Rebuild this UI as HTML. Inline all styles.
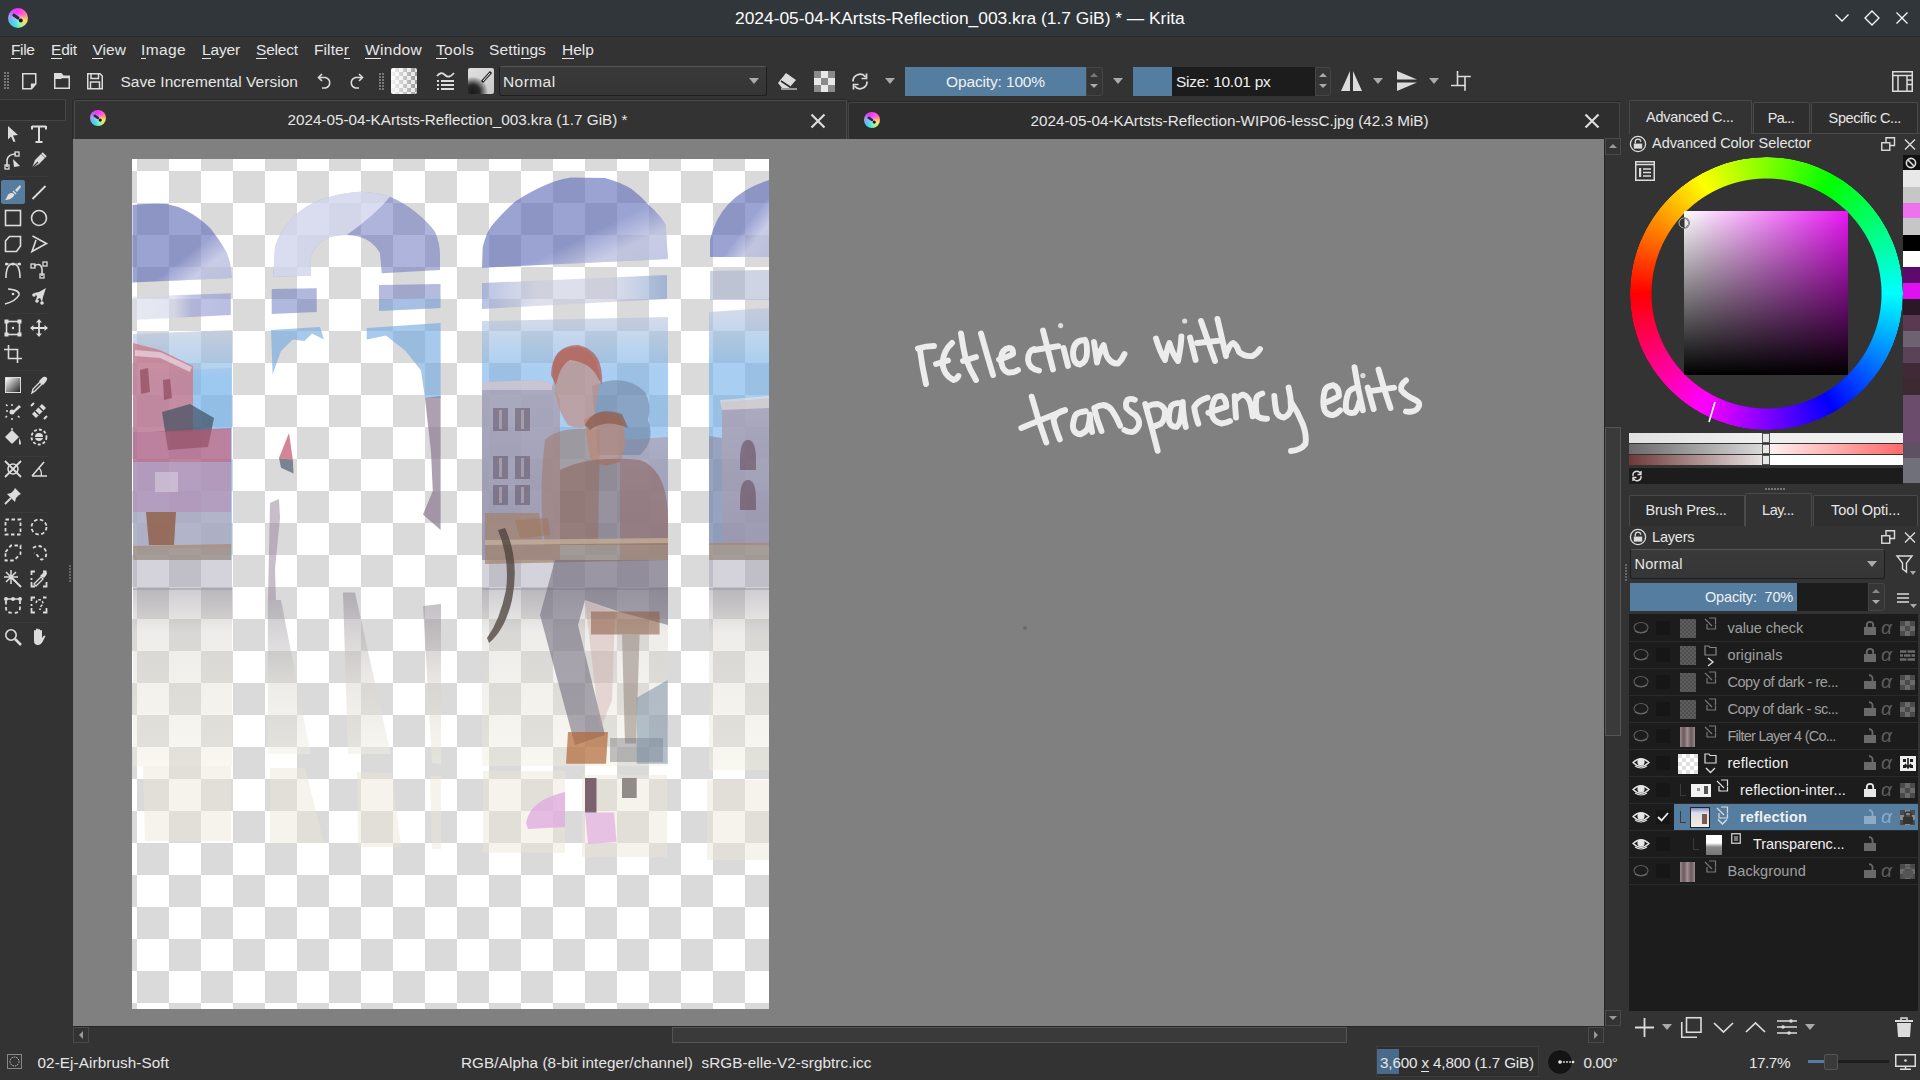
<!DOCTYPE html>
<html><head><meta charset="utf-8"><style>
*{box-sizing:border-box;margin:0;padding:0}
html,body{width:1920px;height:1080px;overflow:hidden;background:#2b2b2b;font-family:"Liberation Sans",sans-serif;color:#e6e6e6}
.a{position:absolute}
.t{position:absolute;white-space:pre;line-height:1}
svg.a{overflow:visible}
</style></head><body>
<div class="a" style="left:0px;top:0px;width:1920px;height:36px;background:#31363b;"></div>
<div class="a" style="left:7.75px;top:7.5px;width:20px;height:20px;border-radius:50%;background:radial-gradient(circle at 50% 55%,rgba(200,230,255,0.55) 0,rgba(200,230,255,0) 45%),conic-gradient(from 0deg,#ff30ff 0deg,#ff70b0 60deg,#ffe060 110deg,#a0f0a0 160deg,#30e8e0 200deg,#60c0f0 240deg,#a0a0f0 280deg,#d050f0 320deg,#ff30ff 360deg)"></div><svg class="a" style="left:7.75px;top:7.5px;" width="20" height="20" viewBox="0 0 20 20"><path d="M6.0 7.199999999999999 L10.0 10.0" stroke="#2a2838" stroke-width="3.2" stroke-linecap="round"/><circle cx="12.8" cy="12.6" r="2.0" fill="#1a1a1a"/></svg>
<div class="t" style="left:735.00px;top:10.27px;font-size:17.4px;color:#fcfcfc;letter-spacing:-0.012px;">2024-05-04-KArtsts-Reflection_003.kra (1.7 GiB) * — Krita</div>
<svg class="a" style="left:1834px;top:12px;" width="16" height="12" viewBox="0 0 16 12"><path d="M1.5 2.5 L8 9 L14.5 2.5" fill="none" stroke="#fcfcfc" stroke-width="1.3"/></svg>
<svg class="a" style="left:1864px;top:10px;" width="16" height="16" viewBox="0 0 16 16"><path d="M8 1 L15 8 L8 15 L1 8 Z" fill="none" stroke="#fcfcfc" stroke-width="1.3"/></svg>
<svg class="a" style="left:1895px;top:11px;" width="14" height="14" viewBox="0 0 14 14"><path d="M1.5 1.5 L12.5 12.5 M12.5 1.5 L1.5 12.5" fill="none" stroke="#fcfcfc" stroke-width="1.3"/></svg>
<div class="a" style="left:0px;top:36px;width:1920px;height:64px;background:#333333;"></div>
<div class="a" style="left:0px;top:36px;width:1920px;height:1px;background:#2a2a2a;"></div>
<div class="t" style="left:11.00px;top:42.38px;font-size:15.5px;color:#e6e6e6;letter-spacing:-0.369px;">File</div>
<div class="a" style="left:11px;top:57.5px;width:10px;height:1px;background:#e6e6e6;"></div>
<div class="t" style="left:51.00px;top:42.38px;font-size:15.5px;color:#e6e6e6;letter-spacing:-0.177px;">Edit</div>
<div class="a" style="left:51px;top:57.5px;width:11px;height:1px;background:#e6e6e6;"></div>
<div class="t" style="left:92.50px;top:42.38px;font-size:15.5px;color:#e6e6e6;letter-spacing:0.046px;">View</div>
<div class="a" style="left:92px;top:57.5px;width:11px;height:1px;background:#e6e6e6;"></div>
<div class="t" style="left:141.00px;top:42.38px;font-size:15.5px;color:#e6e6e6;letter-spacing:0.384px;">Image</div>
<div class="a" style="left:141px;top:57.5px;width:5px;height:1px;background:#e6e6e6;"></div>
<div class="t" style="left:202.00px;top:42.38px;font-size:15.5px;color:#e6e6e6;letter-spacing:-0.155px;">Layer</div>
<div class="a" style="left:202px;top:57.5px;width:9px;height:1px;background:#e6e6e6;"></div>
<div class="t" style="left:256.00px;top:42.38px;font-size:15.5px;color:#e6e6e6;letter-spacing:-0.180px;">Select</div>
<div class="a" style="left:256px;top:57.5px;width:11px;height:1px;background:#e6e6e6;"></div>
<div class="t" style="left:314.00px;top:42.38px;font-size:15.5px;color:#e6e6e6;letter-spacing:0.092px;">Filter</div>
<div class="a" style="left:344px;top:57.5px;width:6px;height:1px;background:#e6e6e6;"></div>
<div class="t" style="left:365.00px;top:42.38px;font-size:15.5px;color:#e6e6e6;letter-spacing:0.312px;">Window</div>
<div class="a" style="left:365px;top:57.5px;width:16px;height:1px;background:#e6e6e6;"></div>
<div class="t" style="left:436.00px;top:42.38px;font-size:15.5px;color:#e6e6e6;letter-spacing:0.363px;">Tools</div>
<div class="a" style="left:436px;top:57.5px;width:11px;height:1px;background:#e6e6e6;"></div>
<div class="t" style="left:489.00px;top:42.38px;font-size:15.5px;color:#e6e6e6;letter-spacing:0.124px;">Settings</div>
<div class="a" style="left:521px;top:57.5px;width:10px;height:1px;background:#e6e6e6;"></div>
<div class="t" style="left:562.00px;top:42.38px;font-size:15.5px;color:#e6e6e6;letter-spacing:0.030px;">Help</div>
<div class="a" style="left:562px;top:57.5px;width:12px;height:1px;background:#e6e6e6;"></div>
<div class="a" style="left:4px;top:72px;width:2px;height:2px;background:#777;"></div>
<div class="a" style="left:7px;top:72px;width:2px;height:2px;background:#777;"></div>
<div class="a" style="left:4px;top:75px;width:2px;height:2px;background:#777;"></div>
<div class="a" style="left:7px;top:75px;width:2px;height:2px;background:#777;"></div>
<div class="a" style="left:4px;top:78px;width:2px;height:2px;background:#777;"></div>
<div class="a" style="left:7px;top:78px;width:2px;height:2px;background:#777;"></div>
<div class="a" style="left:4px;top:81px;width:2px;height:2px;background:#777;"></div>
<div class="a" style="left:7px;top:81px;width:2px;height:2px;background:#777;"></div>
<div class="a" style="left:4px;top:84px;width:2px;height:2px;background:#777;"></div>
<div class="a" style="left:7px;top:84px;width:2px;height:2px;background:#777;"></div>
<div class="a" style="left:4px;top:87px;width:2px;height:2px;background:#777;"></div>
<div class="a" style="left:7px;top:87px;width:2px;height:2px;background:#777;"></div>
<svg class="a" style="left:22px;top:73px;" width="15" height="17" viewBox="0 0 15 17"><path d="M0.75 0.75 H13.75 V11 L9.5 15.75 H0.75 Z" fill="none" stroke="#dcdcdc" stroke-width="1.5"/><path d="M13.75 11 H9.5 V15.75" fill="#dcdcdc" stroke="#dcdcdc" stroke-width="1.2"/></svg>
<svg class="a" style="left:54px;top:73px;" width="17" height="17" viewBox="0 0 17 17"><path d="M0.75 4.5 H15.25 V15.25 H0.75 Z" fill="none" stroke="#dcdcdc" stroke-width="1.5"/><path d="M0 0 H7.5 L9.5 2.5 H16 V4 H9 L7 6 H0Z" fill="#dcdcdc"/></svg>
<svg class="a" style="left:87px;top:73px;" width="16" height="17" viewBox="0 0 16 17"><path d="M0.75 0.75 H13 L15.25 3 V15.75 H0.75 Z" fill="none" stroke="#dcdcdc" stroke-width="1.5"/><path d="M4 1 V5.5 H11.5 V1" fill="none" stroke="#dcdcdc" stroke-width="1.5"/><path d="M3.5 15.5 V9 H12.5 V15.5" fill="none" stroke="#dcdcdc" stroke-width="1.5"/></svg>
<div class="t" style="left:120.50px;top:74.38px;font-size:15.5px;color:#e6e6e6;letter-spacing:0.036px;">Save Incremental Version</div>
<svg class="a" style="left:317px;top:72px;" width="16" height="17" viewBox="0 0 16 17"><path d="M5 2 L1.5 5.5 L5 9" fill="none" stroke="#dcdcdc" stroke-width="1.6"/><path d="M2 5.5 H8.5 A6 5.5 0 0 1 8.5 16 H5" fill="none" stroke="#dcdcdc" stroke-width="1.6"/></svg>
<svg class="a" style="left:348px;top:72px;" width="16" height="17" viewBox="0 0 16 17"><path d="M11 2 L14.5 5.5 L11 9" fill="none" stroke="#dcdcdc" stroke-width="1.6"/><path d="M14 5.5 H7.5 A6 5.5 0 0 0 7.5 16 H11" fill="none" stroke="#dcdcdc" stroke-width="1.6"/></svg>
<div class="a" style="left:379px;top:73px;width:2px;height:2px;background:#777;"></div>
<div class="a" style="left:382px;top:73px;width:2px;height:2px;background:#777;"></div>
<div class="a" style="left:379px;top:76px;width:2px;height:2px;background:#777;"></div>
<div class="a" style="left:382px;top:76px;width:2px;height:2px;background:#777;"></div>
<div class="a" style="left:379px;top:79px;width:2px;height:2px;background:#777;"></div>
<div class="a" style="left:382px;top:79px;width:2px;height:2px;background:#777;"></div>
<div class="a" style="left:379px;top:82px;width:2px;height:2px;background:#777;"></div>
<div class="a" style="left:382px;top:82px;width:2px;height:2px;background:#777;"></div>
<div class="a" style="left:379px;top:85px;width:2px;height:2px;background:#777;"></div>
<div class="a" style="left:382px;top:85px;width:2px;height:2px;background:#777;"></div>
<div class="a" style="left:379px;top:88px;width:2px;height:2px;background:#777;"></div>
<div class="a" style="left:382px;top:88px;width:2px;height:2px;background:#777;"></div>
<div class="a" style="left:391px;top:68px;width:26px;height:26px;border-radius:2px;background:linear-gradient(90deg,rgba(255,255,255,0.9),rgba(255,255,255,0)),repeating-conic-gradient(#9a9a9a 0 25%,#e8e8e8 0 50%) 0 0/8px 8px"></div>
<svg class="a" style="left:436px;top:71px;" width="20" height="20" viewBox="0 0 20 20"><path d="M1 5 Q5 0 9 4 T18 2" fill="none" stroke="#dcdcdc" stroke-width="1.8"/><path d="M1 9h2v2h-2zM1 13h2v2h-2zM1 17h2v2h-2z" fill="#dcdcdc"/><path d="M5 10h13M5 14h13M5 18h13" stroke="#dcdcdc" stroke-width="1.8"/></svg>
<div class="a" style="left:468px;top:68px;width:26px;height:26px;border-radius:2px;background:radial-gradient(circle at 18% 92%,#1a1a1a 0,#2a2a2a 22%,rgba(200,200,200,0) 48%),linear-gradient(135deg,#e0e0e0,#c8c8c8)"></div>
<svg class="a" style="left:468px;top:68px;" width="26" height="26" viewBox="0 0 26 26"><path d="M14 14 L23 4" stroke="#222" stroke-width="3"/><path d="M15 13 L22 5" stroke="#fff" stroke-width="1"/></svg>
<div class="a" style="left:499px;top:66px;width:268px;height:30px;background:linear-gradient(#3a3a3a,#353535);border:1px solid #1e1e1e;border-top-color:#565656;border-radius:3px"></div>
<div class="t" style="left:503.00px;top:73.88px;font-size:15.5px;color:#e6e6e6;letter-spacing:0.424px;">Normal</div>
<svg class="a" style="left:749px;top:78px;" width="10" height="6" viewBox="0 0 10 6"><path d="M0 0 H10 L5 6Z" fill="#aaa"/></svg>
<svg class="a" style="left:777px;top:72px;" width="21" height="18" viewBox="0 0 21 18"><path d="M9 1 L19 8 L12 16 H5 L1 11 Z" fill="#dcdcdc"/><path d="M4 9 L13 15" stroke="#2b2b2b" stroke-width="1.6"/><path d="M4 17 H20" stroke="#dcdcdc" stroke-width="1.2"/></svg>
<div class="a" style="left:814px;top:71px;width:21px;height:21px;background:repeating-conic-gradient(#e8e8e8 0 25%,#8a8a8a 0 50%) 0 0/14px 14px"></div>
<svg class="a" style="left:850px;top:72px;" width="20" height="19" viewBox="0 0 20 19"><path d="M3 9.5 A7 7 0 0 1 15.5 5" fill="none" stroke="#dcdcdc" stroke-width="1.7"/><path d="M16.5 1.5 V6.5 H11.5" fill="none" stroke="#dcdcdc" stroke-width="1.7"/><path d="M17 9.5 A7 7 0 0 1 4.5 14" fill="none" stroke="#dcdcdc" stroke-width="1.7"/><path d="M3.5 17.5 V12.5 H8.5" fill="none" stroke="#dcdcdc" stroke-width="1.7"/></svg>
<svg class="a" style="left:885px;top:78px;" width="10" height="6" viewBox="0 0 10 6"><path d="M0 0 H10 L5 6Z" fill="#aaa"/></svg>
<div class="a" style="left:905px;top:67px;width:181px;height:29px;background:#557da0;"></div>
<div class="t" style="left:946.00px;top:74.18px;font-size:15.5px;color:#f0f0f0;letter-spacing:-0.139px;">Opacity: 100%</div>
<div class="a" style="left:1086px;top:67px;width:17px;height:29px;background:#353535;border:1px solid #454545;border-radius:0 3px 3px 0"></div>
<svg class="a" style="left:1089px;top:72px;" width="10" height="18" viewBox="0 0 10 18"><path d="M1 5 L5 1 L9 5Z" fill="#777"/><path d="M1 12 L5 16 L9 12Z" fill="#aaa"/></svg>
<svg class="a" style="left:1113px;top:78px;" width="10" height="6" viewBox="0 0 10 6"><path d="M0 0 H10 L5 6Z" fill="#aaa"/></svg>
<div class="a" style="left:1133px;top:67px;width:39px;height:29px;background:#557da0;"></div>
<div class="a" style="left:1172px;top:67px;width:143px;height:29px;background:#1c1c1c;"></div>
<div class="t" style="left:1176.00px;top:73.88px;font-size:15.5px;color:#f0f0f0;letter-spacing:-0.267px;">Size: 10.01 px</div>
<div class="a" style="left:1315px;top:67px;width:16px;height:29px;background:#353535;border:1px solid #454545;border-radius:0 3px 3px 0"></div>
<svg class="a" style="left:1318px;top:72px;" width="10" height="18" viewBox="0 0 10 18"><path d="M1 5 L5 1 L9 5Z" fill="#aaa"/><path d="M1 12 L5 16 L9 12Z" fill="#aaa"/></svg>
<svg class="a" style="left:1341px;top:71px;" width="21" height="20" viewBox="0 0 21 20"><path d="M9 0 L9 20 L0 20Z" fill="#dcdcdc"/><path d="M12 0 L12 20 L21 20Z" fill="#dcdcdc"/></svg>
<svg class="a" style="left:1373px;top:78px;" width="10" height="6" viewBox="0 0 10 6"><path d="M0 0 H10 L5 6Z" fill="#aaa"/></svg>
<svg class="a" style="left:1397px;top:71px;" width="20" height="20" viewBox="0 0 20 20"><path d="M0 0 L20 8.5 L0 8.5Z" fill="#dcdcdc"/><path d="M0 11.5 L20 11.5 L0 20Z" fill="#dcdcdc"/></svg>
<svg class="a" style="left:1429px;top:78px;" width="10" height="6" viewBox="0 0 10 6"><path d="M0 0 H10 L5 6Z" fill="#aaa"/></svg>
<svg class="a" style="left:1451px;top:71px;" width="21" height="20" viewBox="0 0 21 20"><path d="M6.5 0 V14.5 M6.5 5.5 H19.8 M0 14.5 H15 M14 5.5 V19.8" fill="none" stroke="#dcdcdc" stroke-width="1.6"/></svg>
<svg class="a" style="left:1892px;top:71px;" width="21" height="21" viewBox="0 0 21 21"><path d="M0.75 0.75 H20.25 V20.25 H0.75Z M0.75 4.5 H20.25 M6 4.5 V20.25 M15 4.5 V20.25 M15 9 H20.25 M15 13.5 H20.25" fill="none" stroke="#dcdcdc" stroke-width="1.5"/></svg>
<div class="a" style="left:0px;top:100px;width:73px;height:945px;background:#333333;"></div>
<div class="a" style="left:0px;top:99px;width:66px;height:22px;background:#2e2e2e;border:1px solid #454545;border-left:none"></div>
<svg class="a" style="left:4.0px;top:125.0px;" width="18" height="18" viewBox="0 0 18 18"><path d="M4 1 L14 10 L9 10.5 L11.5 16.5 L9.5 17 L7 11.5 L4 14.5Z" fill="#dcdcdc"/></svg>
<svg class="a" style="left:30.0px;top:125.0px;" width="18" height="18" viewBox="0 0 18 18"><path d="M2 1.5 H16 M2 1 V4.5 M16 1 V4.5 M9 1.5 V17 M5.5 17 H12.5" fill="none" stroke="#dcdcdc" stroke-width="2"/></svg>
<svg class="a" style="left:4.0px;top:151.0px;" width="18" height="18" viewBox="0 0 18 18"><path d="M3 16 V9 Q4 3 12 3" fill="none" stroke="#dcdcdc" stroke-width="1.6"/><rect x="1" y="14" width="4" height="4" fill="none" stroke="#dcdcdc" stroke-width="1.3"/><rect x="11" y="1" width="4" height="4" fill="none" stroke="#dcdcdc" stroke-width="1.3"/><path d="M9 8 L16 15 L10 16Z" fill="#dcdcdc"/></svg>
<svg class="a" style="left:30.0px;top:151.0px;" width="18" height="18" viewBox="0 0 18 18"><path d="M2 17 L5 9 L11 3 L15 7 L9 13 Z" fill="#dcdcdc"/><path d="M12 2 L16 6" stroke="#dcdcdc" stroke-width="2"/><path d="M2 17 L8 11" stroke="#333333" stroke-width="1.2"/></svg>
<div class="a" style="left:7px;top:176px;width:41px;height:1px;background:#3a3a3a;"></div>
<div class="a" style="left:1px;top:180px;width:24px;height:24px;background:#557da0;border-radius:2px;"></div>
<svg class="a" style="left:4.0px;top:183.0px;" width="18" height="18" viewBox="0 0 18 18"><path d="M16 2 L11 7 L13 9 L17 4Z" fill="#dcdcdc"/><path d="M9 8 L12 11" stroke="#dcdcdc" stroke-width="1.5"/><path d="M8 10 Q4 10 3 14 Q2 16 1 17 Q6 17 9 14 Q11 12 10 11Z" fill="#e8e0d8"/></svg>
<svg class="a" style="left:30.0px;top:183.0px;" width="18" height="18" viewBox="0 0 18 18"><path d="M2.5 16 L15.5 3" stroke="#dcdcdc" stroke-width="1.8"/></svg>
<svg class="a" style="left:4.0px;top:209.0px;" width="18" height="18" viewBox="0 0 18 18"><rect x="1.5" y="1.5" width="15" height="15" fill="none" stroke="#dcdcdc" stroke-width="1.6"/></svg>
<svg class="a" style="left:30.0px;top:209.0px;" width="18" height="18" viewBox="0 0 18 18"><circle cx="9" cy="9" r="7.5" fill="none" stroke="#dcdcdc" stroke-width="1.6"/></svg>
<svg class="a" style="left:4.0px;top:235.0px;" width="18" height="18" viewBox="0 0 18 18"><path d="M1.5 6 L5.5 1.5 H16.5 V11 L12.5 16.5 H1.5Z" fill="none" stroke="#dcdcdc" stroke-width="1.6"/></svg>
<svg class="a" style="left:30.0px;top:235.0px;" width="18" height="18" viewBox="0 0 18 18"><path d="M2.5 1 L16.5 8.5 L2 16.5 L6 5" fill="none" stroke="#dcdcdc" stroke-width="1.6"/></svg>
<svg class="a" style="left:4.0px;top:261.0px;" width="18" height="18" viewBox="0 0 18 18"><path d="M2 17 Q2 3 9 3 Q16 3 16 17" fill="none" stroke="#dcdcdc" stroke-width="1.6"/><circle cx="2.5" cy="3" r="1.6" fill="#dcdcdc"/><circle cx="9" cy="3" r="1.6" fill="#dcdcdc"/><circle cx="15.5" cy="3" r="1.6" fill="#dcdcdc"/><path d="M2.5 3H15.5" stroke="#dcdcdc" stroke-width="1"/></svg>
<svg class="a" style="left:30.0px;top:261.0px;" width="18" height="18" viewBox="0 0 18 18"><path d="M4 5 Q11 1 12 8 V15" fill="none" stroke="#dcdcdc" stroke-width="1.6"/><rect x="1" y="3" width="4" height="4" fill="none" stroke="#dcdcdc" stroke-width="1.3"/><rect x="13" y="1" width="4" height="4" fill="none" stroke="#dcdcdc" stroke-width="1.3"/><rect x="10" y="13" width="4" height="4" fill="none" stroke="#dcdcdc" stroke-width="1.3"/></svg>
<svg class="a" style="left:4.0px;top:287.0px;" width="18" height="18" viewBox="0 0 18 18"><path d="M4 2 Q16 3 15 8 Q12 14 1 17" fill="none" stroke="#dcdcdc" stroke-width="1.6"/><circle cx="9" cy="7" r="1.3" fill="#dcdcdc"/></svg>
<svg class="a" style="left:30.0px;top:287.0px;" width="18" height="18" viewBox="0 0 18 18"><path d="M16 1 L9 5 L4 6 L7 9 L6 13 L10 11 L12 15 L13 10 Z" fill="#dcdcdc"/><circle cx="4" cy="8" r="1.8" fill="#dcdcdc"/><circle cx="7" cy="14" r="1.8" fill="#dcdcdc"/><circle cx="12" cy="16" r="1.8" fill="#dcdcdc"/></svg>
<div class="a" style="left:7px;top:313px;width:41px;height:1px;background:#3a3a3a;"></div>
<svg class="a" style="left:4.0px;top:319.0px;" width="18" height="18" viewBox="0 0 18 18"><rect x="2.5" y="2.5" width="13" height="13" fill="none" stroke="#dcdcdc" stroke-width="1.6"/><rect x="0.5" y="0.5" width="4" height="4" fill="#dcdcdc"/><rect x="13.5" y="0.5" width="4" height="4" fill="#dcdcdc"/><rect x="0.5" y="13.5" width="4" height="4" fill="#dcdcdc"/><rect x="13.5" y="13.5" width="4" height="4" fill="#dcdcdc"/><circle cx="9" cy="9" r="1.2" fill="#dcdcdc"/></svg>
<svg class="a" style="left:30.0px;top:319.0px;" width="18" height="18" viewBox="0 0 18 18"><path d="M9 1 V17 M1 9 H17" stroke="#dcdcdc" stroke-width="1.8"/><path d="M9 0 L12 3.5 H6Z M9 18 L12 14.5 H6Z M0 9 L3.5 6 V12Z M18 9 L14.5 6 V12Z" fill="#dcdcdc"/></svg>
<svg class="a" style="left:4.0px;top:345.0px;" width="18" height="18" viewBox="0 0 18 18"><path d="M4.5 0 V13.5 H18 M0 4.5 H13.5 V18" fill="none" stroke="#dcdcdc" stroke-width="1.6" stroke-width="2"/></svg>
<div class="a" style="left:7px;top:370px;width:41px;height:1px;background:#3a3a3a;"></div>
<div class="a" style="left:5px;top:377px;width:16px;height:16px;border:1.5px solid #dcdcdc;background:linear-gradient(135deg,#fff,#222)"></div>
<svg class="a" style="left:30.0px;top:376.0px;" width="18" height="18" viewBox="0 0 18 18"><path d="M2 17 L3 13 L10 6 L12 8 L5 15Z" fill="none" stroke="#dcdcdc" stroke-width="1.4"/><path d="M9 5 L13 1 Q16 0 17 2 Q18 4 13 9Z" fill="#dcdcdc"/></svg>
<svg class="a" style="left:4.0px;top:402.0px;" width="18" height="18" viewBox="0 0 18 18"><path d="M15 3 L9 9 L10 11 L17 5Z" fill="#dcdcdc"/><circle cx="8" cy="10" r="2.5" fill="#dcdcdc"/><path d="M2 9h2M14 14l1.5 1.5M8 16v2M3 14l-1.5 1.5M3.5 4L2 2.5M8 2v2" stroke="#dcdcdc" stroke-width="1.5"/></svg>
<svg class="a" style="left:30.0px;top:402.0px;" width="18" height="18" viewBox="0 0 18 18"><path d="M2 12 L12 2 L16 6 L6 16Z" fill="#dcdcdc"/><path d="M5 9 L9 13 M9 5 L13 9" stroke="#333333" stroke-width="1.5"/><path d="M1 4 L4 1 M14 17 L17 14" stroke="#dcdcdc" stroke-width="2"/></svg>
<svg class="a" style="left:4.0px;top:428.0px;" width="18" height="18" viewBox="0 0 18 18"><path d="M1 9 L8 2 L15 9 L9 15 Q8 16 7 15Z" fill="#dcdcdc"/><path d="M1 9 H15" stroke="#333333" stroke-width="0"/><path d="M15 10 Q17 13 17 16 Q16 17 15 16 Q15 13 15 10Z" fill="#dcdcdc"/><path d="M8 2 V0" stroke="#dcdcdc" stroke-width="1.5"/></svg>
<svg class="a" style="left:30.0px;top:428.0px;" width="18" height="18" viewBox="0 0 18 18"><circle cx="9" cy="9" r="7.5" fill="none" stroke="#dcdcdc" stroke-width="1.8" stroke-dasharray="3 2"/><path d="M5 9 A4 4 0 0 1 13 9Z" fill="#dcdcdc"/><path d="M5 10 H13 Q12 13 9 13 Q6 13 5 10Z" fill="#dcdcdc"/></svg>
<div class="a" style="left:7px;top:456px;width:41px;height:1px;background:#3a3a3a;"></div>
<svg class="a" style="left:4.0px;top:460.0px;" width="18" height="18" viewBox="0 0 18 18"><circle cx="9" cy="9" r="5" fill="none" stroke="#dcdcdc" stroke-width="1.6"/><path d="M1 1 L17 17 M17 1 L1 17" stroke="#dcdcdc" stroke-width="1.8"/></svg>
<svg class="a" style="left:30.0px;top:460.0px;" width="18" height="18" viewBox="0 0 18 18"><path d="M2 16 L14 2 M2 16 H17" fill="none" stroke="#dcdcdc" stroke-width="1.6"/><path d="M9 8 A8 8 0 0 1 11 16" fill="none" stroke="#dcdcdc" stroke-width="1.3"/></svg>
<svg class="a" style="left:4.0px;top:487.0px;" width="18" height="18" viewBox="0 0 18 18"><path d="M11 1 L17 7 L15 8 L12 11 L11 15 L3 7 L7 6 L10 3Z" fill="#dcdcdc"/><path d="M7 11 L1 17" stroke="#dcdcdc" stroke-width="1.8"/></svg>
<div class="a" style="left:7px;top:512px;width:41px;height:1px;background:#3a3a3a;"></div>
<svg class="a" style="left:4.0px;top:518.0px;" width="18" height="18" viewBox="0 0 18 18"><rect x="1.5" y="1.5" width="15" height="15" fill="none" stroke="#dcdcdc" stroke-width="1.8" stroke-dasharray="3.5 2.5"/></svg>
<svg class="a" style="left:30.0px;top:518.0px;" width="18" height="18" viewBox="0 0 18 18"><circle cx="9" cy="9" r="7.5" fill="none" stroke="#dcdcdc" stroke-width="1.8" stroke-dasharray="3.5 2.5"/></svg>
<svg class="a" style="left:4.0px;top:544.0px;" width="18" height="18" viewBox="0 0 18 18"><path d="M1.5 8 L7 1.5 H16.5 V10 L10 16.5 H1.5Z" fill="none" stroke="#dcdcdc" stroke-width="1.8" stroke-dasharray="3.5 2.5"/></svg>
<svg class="a" style="left:30.0px;top:544.0px;" width="18" height="18" viewBox="0 0 18 18"><path d="M3 4 Q8 0 14 4 Q18 9 15 14 Q11 17 9 14 Q7 10 4 9" fill="none" stroke="#dcdcdc" stroke-width="1.8" stroke-dasharray="3.5 2.5"/></svg>
<svg class="a" style="left:4.0px;top:570.0px;" width="18" height="18" viewBox="0 0 18 18"><path d="M7 7 L17 17" stroke="#dcdcdc" stroke-width="2"/><path d="M7 0V14M0 7H14M2 2L12 12M12 2L2 12" stroke="#dcdcdc" stroke-width="1.5"/></svg>
<svg class="a" style="left:30.0px;top:570.0px;" width="18" height="18" viewBox="0 0 18 18"><path d="M1.5 5 V1.5 H5 M13 1.5 H16.5 M16.5 12 V16.5 H13 M5 16.5 H1.5 V12 M1.5 8V10" fill="none" stroke="#dcdcdc" stroke-width="1.8"/><path d="M4 14 L11 7 L13 9 L6 16Z" fill="none" stroke="#dcdcdc" stroke-width="1.3"/><path d="M10 6 L14 2 Q16 1 17 3 Q17 5 14 8Z" fill="#dcdcdc"/></svg>
<svg class="a" style="left:4.0px;top:596.0px;" width="18" height="18" viewBox="0 0 18 18"><path d="M2 5 V12 Q2 17 9 17 Q16 17 16 12 V5" fill="none" stroke="#dcdcdc" stroke-width="1.8" stroke-dasharray="3.5 2.5"/><path d="M2 3H16" stroke="#dcdcdc" stroke-width="1.5"/><circle cx="2" cy="3" r="2" fill="#dcdcdc"/><circle cx="9" cy="3" r="2" fill="#dcdcdc"/><circle cx="16" cy="3" r="2" fill="#dcdcdc"/></svg>
<svg class="a" style="left:30.0px;top:596.0px;" width="18" height="18" viewBox="0 0 18 18"><path d="M1.5 5 V1.5 H5 M13 1.5 H16.5 M16.5 12 V16.5 H13 M5 16.5 H1.5 V12 M1.5 8V10" fill="none" stroke="#dcdcdc" stroke-width="1.8"/><path d="M6 7 Q7 3 11 4 Q14 6 12 9 Q10 11 10 14" fill="none" stroke="#dcdcdc" stroke-width="1.6" stroke-dasharray="2.5 1.5"/></svg>
<div class="a" style="left:7px;top:622px;width:41px;height:1px;background:#3a3a3a;"></div>
<svg class="a" style="left:4.0px;top:628.0px;" width="18" height="18" viewBox="0 0 18 18"><circle cx="7" cy="7" r="5.2" fill="none" stroke="#dcdcdc" stroke-width="1.6" stroke-width="2"/><path d="M11 11 L17 17" stroke="#dcdcdc" stroke-width="2.5"/></svg>
<svg class="a" style="left:30.0px;top:628.0px;" width="18" height="18" viewBox="0 0 18 18"><path d="M4 8 V3 Q4 2 5 2 Q6 2 6 3 V8 V1.5 Q6 0.5 7 0.5 Q8 0.5 8 1.5 V8 V2 Q8 1 9 1 Q10 1 10 2 V8 V3 Q10 2 11 2 Q12 2 12 3 V10 L13.5 8 Q14.5 7 15.5 8 L13 13 Q11 17 8 17 Q4 17 4 13Z" fill="#dcdcdc"/></svg>
<div class="a" style="left:69px;top:565px;width:2px;height:1.5px;background:#666;"></div>
<div class="a" style="left:69px;top:568px;width:2px;height:1.5px;background:#666;"></div>
<div class="a" style="left:69px;top:571px;width:2px;height:1.5px;background:#666;"></div>
<div class="a" style="left:69px;top:574px;width:2px;height:1.5px;background:#666;"></div>
<div class="a" style="left:69px;top:577px;width:2px;height:1.5px;background:#666;"></div>
<div class="a" style="left:69px;top:580px;width:2px;height:1.5px;background:#666;"></div>
<div class="a" style="left:66px;top:96px;width:1562px;height:43px;background:#333333;"></div>
<div class="a" style="left:74px;top:99px;width:773px;height:1px;background:#262626;"></div>
<div class="a" style="left:848px;top:101px;width:772px;height:1px;background:#262626;"></div>
<div class="a" style="left:72px;top:100px;width:1px;height:39px;background:#2a2a2a;"></div>
<div class="a" style="left:74px;top:100px;width:773px;height:39px;background:#333;border:1px solid #4a4a4a;border-bottom:none;border-radius:2px 2px 0 0"></div>
<div class="a" style="left:90.0px;top:110.0px;width:16px;height:16px;border-radius:50%;background:radial-gradient(circle at 50% 55%,rgba(200,230,255,0.55) 0,rgba(200,230,255,0) 45%),conic-gradient(from 0deg,#ff30ff 0deg,#ff70b0 60deg,#ffe060 110deg,#a0f0a0 160deg,#30e8e0 200deg,#60c0f0 240deg,#a0a0f0 280deg,#d050f0 320deg,#ff30ff 360deg)"></div><svg class="a" style="left:90.0px;top:110.0px;" width="16" height="16" viewBox="0 0 16 16"><path d="M4.8 5.76 L8.0 8.0" stroke="#2a2838" stroke-width="2.56" stroke-linecap="round"/><circle cx="10.24" cy="10.08" r="1.6" fill="#1a1a1a"/></svg>
<div class="t" style="left:287.50px;top:112.09px;font-size:15.25px;color:#e6e6e6;letter-spacing:0.002px;">2024-05-04-KArtsts-Reflection_003.kra (1.7 GiB) *</div>
<svg class="a" style="left:810px;top:113px;" width="16" height="16" viewBox="0 0 16 16"><path d="M1.5 1.5 L14.5 14.5 M14.5 1.5 L1.5 14.5" stroke="#dcdcdc" stroke-width="2.2"/></svg>
<div class="a" style="left:848px;top:102px;width:772px;height:37px;background:#2e2e2e;border:1px solid #454545;border-bottom:none;border-radius:2px 2px 0 0"></div>
<div class="a" style="left:864.0px;top:111.5px;width:16px;height:16px;border-radius:50%;background:radial-gradient(circle at 50% 55%,rgba(200,230,255,0.55) 0,rgba(200,230,255,0) 45%),conic-gradient(from 0deg,#ff30ff 0deg,#ff70b0 60deg,#ffe060 110deg,#a0f0a0 160deg,#30e8e0 200deg,#60c0f0 240deg,#a0a0f0 280deg,#d050f0 320deg,#ff30ff 360deg)"></div><svg class="a" style="left:864.0px;top:111.5px;" width="16" height="16" viewBox="0 0 16 16"><path d="M4.8 5.76 L8.0 8.0" stroke="#2a2838" stroke-width="2.56" stroke-linecap="round"/><circle cx="10.24" cy="10.08" r="1.6" fill="#1a1a1a"/></svg>
<div class="t" style="left:1030.50px;top:113.09px;font-size:15.25px;color:#e6e6e6;letter-spacing:-0.006px;">2024-05-04-KArtsts-Reflection-WIP06-lessC.jpg (42.3 MiB)</div>
<svg class="a" style="left:1584px;top:113px;" width="16" height="16" viewBox="0 0 16 16"><path d="M1.5 1.5 L14.5 14.5 M14.5 1.5 L1.5 14.5" stroke="#dcdcdc" stroke-width="2.2"/></svg>
<div class="a" style="left:73px;top:139px;width:1531px;height:887px;background:#808080;"></div>
<div class="a" style="left:1604px;top:139px;width:17px;height:906px;background:#333;"></div>
<div class="a" style="left:1604px;top:139px;width:1px;height:887px;background:#262626;"></div>
<div class="a" style="left:1605px;top:138px;width:16px;height:17px;border:1px solid #4a4a4a;background:#333"></div>
<svg class="a" style="left:1608px;top:142px;" width="10" height="8" viewBox="0 0 10 8"><path d="M1 6 L5 2 L9 6Z" fill="#999"/></svg>
<div class="a" style="left:1605px;top:427px;width:16px;height:309px;border:1px solid #555;background:#3a3a3a"></div>
<div class="a" style="left:1605px;top:1010px;width:16px;height:16px;border:1px solid #4a4a4a;background:#333"></div>
<svg class="a" style="left:1608px;top:1014px;" width="10" height="8" viewBox="0 0 10 8"><path d="M1 2 L5 6 L9 2Z" fill="#999"/></svg>
<div class="a" style="left:73px;top:1026px;width:1531px;height:19px;background:#333;"></div>
<div class="a" style="left:73px;top:1026px;width:1531px;height:1px;background:#262626;"></div>
<div class="a" style="left:73px;top:1027px;width:16px;height:16px;border:1px solid #4a4a4a;background:#333"></div>
<svg class="a" style="left:77px;top:1030px;" width="8" height="10" viewBox="0 0 8 10"><path d="M6 1 L2 5 L6 9Z" fill="#999"/></svg>
<div class="a" style="left:672px;top:1027px;width:675px;height:16px;border:1px solid #555;background:#3a3a3a"></div>
<div class="a" style="left:1588px;top:1027px;width:16px;height:16px;border:1px solid #4a4a4a;background:#333"></div>
<svg class="a" style="left:1592px;top:1030px;" width="8" height="10" viewBox="0 0 8 10"><path d="M2 1 L6 5 L2 9Z" fill="#999"/></svg>
<div class="a" style="left:1022.5px;top:625.5px;width:4px;height:4px;background:#6c6c6c;border-radius:50%;"></div>
<svg class="a" style="left:0;top:0" width="1920" height="1080"><g fill="none" stroke="#ececec" stroke-width="5.9" stroke-linecap="round" stroke-linejoin="round"><path d="M920 350 Q922 366 926 384"/><path d="M918 348.5 Q926 346 934 346"/><path d="M952 343 Q944 350 942.5 362 Q943 375 953.7 380 Q957 379 958.4 376"/><path d="M936 364 L948 360.5"/><path d="M961 333.5 Q963 347 965.5 358 Q970 370 976 380"/><path d="M963 361 L976 357"/><path d="M981 333.5 Q987 355 993 375"/><path d="M999 359.5 Q1008 357 1013 354 Q1013.5 348 1009 348 Q1002 349 1001 358 Q1001 370 1008 372.5 Q1014 373 1018 370"/><path d="M1034 349 Q1028 351 1028 360 Q1029 369 1039 370.6"/><path d="M1043 330.5 L1053 369.5"/><path d="M1034.5 350 L1058.5 346.2"/><path d="M1063.5 348 L1068 366"/><path d="M1085 340 Q1074 340 1073 352 Q1073 364 1080 364.5 Q1087 362 1087 352 Q1087 342 1085 340"/><path d="M1094 342 Q1096 355 1097 362.5 Q1100 350 1103.7 345 Q1106 356 1108 358 Q1112 364 1118 363.6 Q1122 360 1124.5 354"/><path d="M1156 338.5 Q1160 352 1165 360 Q1167 349 1169.4 343 Q1173 355 1178 361 Q1181 347 1181.4 336.5"/><path d="M1190 337.5 L1195.6 360"/><path d="M1201 321 L1215 361"/><path d="M1197 343 L1220 340.6"/><path d="M1217.5 319 L1226 356"/><path d="M1227 352 Q1230 344 1233 343 Q1237 345 1239 352 Q1245 357 1252.5 356 Q1257 354 1260 349"/><path d="M1031.7 396.7 Q1038 420 1046.3 442.5"/><path d="M1021.3 427.9 Q1039 420.6 1065 410.2"/><path d="M1059.8 439.4 Q1055 428 1053.5 419.6 Q1056 412 1065 410.2"/><path d="M1085.8 411.3 Q1077 412 1075 416 Q1072 425 1073.3 429 Q1075 434 1080.6 434.2 Q1086 432 1087.9 427.9 Q1090 420 1090 414.4 Q1090 424 1092.1 432"/><path d="M1101.5 431 Q1097 420 1094.2 408.1 Q1099 405 1103.5 405 Q1109 406 1111.9 410.2 Q1117 418 1120.2 425.8"/><path d="M1134.8 399.8 Q1131 398 1127.5 399.8 Q1125 403 1126.5 408.1 Q1130 412 1135.8 415.4 Q1140 420 1139 424.8 Q1137 431 1131.7 432.1 Q1127 432 1124.4 430"/><path d="M1145.2 404 Q1152 428 1157.7 450.8"/><path d="M1147.3 407.1 Q1151 404 1157.7 404 Q1164 406 1165 411.3 Q1165 420 1160.8 423.75 Q1156 426 1152.5 426.9"/><path d="M1180.6 402.9 Q1174 403 1171.25 406 Q1168 414 1169.2 421.7 Q1171 427 1176.5 426.9 Q1180 424 1180.6 417.5 Q1182 408 1182.7 402 Q1183 416 1185.8 426.9"/><path d="M1198.3 423.75 Q1195 414 1194.2 407.1 Q1199 400 1207.7 397.7"/><path d="M1208.4 412.7 L1226.4 406.7 Q1226 398 1221.6 395.9 Q1216 396 1214.4 399.5 Q1211 407 1212 415.1 Q1214 422 1221.6 423.5 Q1227 423 1230 421.1"/><path d="M1234.7 396 Q1235 407 1236 417.5"/><path d="M1236 399.5 Q1240 395 1243 394.7 Q1248 396 1250.3 403.1 Q1252 410 1252.7 416.3"/><path d="M1262.3 393.5 Q1257 395 1256.3 398.3 Q1255 410 1257.5 416.3 Q1261 419 1267 418.7"/><path d="M1274.3 396 Q1275 406 1276.7 412.7 Q1279 417 1283.9 417.5 Q1290 415 1291 407.9 Q1291 397 1288.6 387.6"/><path d="M1291 401.9 Q1298 412 1303 424.7 Q1307 436 1305.4 443.9 Q1301 450 1291 451"/><path d="M1327 401.9 Q1335 399 1339 395.9 Q1339 387 1333 385.2 Q1326 386 1324.6 391.1 Q1322 402 1324.6 410.3 Q1327 415 1333 415.1 Q1337 414 1340.2 410.3"/><path d="M1358.1 387.6 Q1351 388 1348.5 392.3 Q1345 401 1346.1 410.3 Q1349 414 1354.5 412.7 Q1358 409 1359.3 401.9"/><path d="M1354.5 367.2 Q1358 390 1362.9 410.3"/><path d="M1367.7 387.6 L1373.7 409.1"/><path d="M1378.5 369.6 Q1384 390 1390.5 407.9"/><path d="M1370.1 391.1 L1394.1 387.6"/><path d="M1406 380.4 Q1400 385 1401.2 389.9 Q1405 395 1414.4 399.5 Q1420 402 1419.2 405.5 Q1417 411 1412 411.5 Q1408 412 1406 411.5"/><circle cx="1060.6" cy="325.6" r="2.6" fill="#dcdcdc" stroke="none"/><circle cx="1184.7" cy="321" r="2.6" fill="#dcdcdc" stroke="none"/><circle cx="1362.9" cy="375.6" r="2.6" fill="#dcdcdc" stroke="none"/></g></svg>
<div class="a" style="left:132px;top:159px;width:637px;height:850px;background:repeating-conic-gradient(#dadada 0 25%,#ffffff 0 50%) 37px 44px/64px 64px"></div>
<svg class="a" style="left:0;top:0" width="1920" height="1080"><defs>
<clipPath id="cv"><rect x="132" y="159" width="637" height="850"/></clipPath>
<linearGradient id="streak" gradientUnits="objectBoundingBox" x1="0" y1="0" x2="1" y2="1"><stop offset="0" stop-color="#fff" stop-opacity="0"/><stop offset="0.6" stop-color="#fff" stop-opacity="0"/><stop offset="0.78" stop-color="#fff" stop-opacity="0.45"/><stop offset="1" stop-color="#fff" stop-opacity="0.4"/></linearGradient>
<linearGradient id="band" x1="0" y1="0" x2="1" y2="0"><stop offset="0" stop-color="#8a9cd0"/><stop offset="0.3" stop-color="#c8cce0"/><stop offset="0.7" stop-color="#c4c8dc"/><stop offset="1" stop-color="#7a9ad0"/></linearGradient>
<linearGradient id="sky" x1="0" y1="0" x2="0" y2="1"><stop offset="0" stop-color="#b8c4dc"/><stop offset="0.22" stop-color="#70aee8"/><stop offset="1" stop-color="#68b0f0"/></linearGradient>
<linearGradient id="cream" x1="0" y1="0" x2="0" y2="1"><stop offset="0" stop-color="#8a8690"/><stop offset="0.25" stop-color="#d8d4cc"/><stop offset="1" stop-color="#f0ecdc"/></linearGradient>
<linearGradient id="legs" x1="0" y1="0" x2="0" y2="1"><stop offset="0" stop-color="#8a8490"/><stop offset="0.5" stop-color="#d6d2ca"/><stop offset="1" stop-color="#f0ede2"/></linearGradient>
<linearGradient id="bldg" x1="0" y1="0" x2="0" y2="1"><stop offset="0" stop-color="#aca2b4"/><stop offset="1" stop-color="#9a8ea0"/></linearGradient>
<linearGradient id="band1" x1="0" y1="0" x2="1" y2="0"><stop offset="0" stop-color="#d8dce8"/><stop offset="0.42" stop-color="#d0d4e8"/><stop offset="0.6" stop-color="#98a0d8"/><stop offset="1" stop-color="#8c96d0"/></linearGradient></defs><g clip-path="url(#cv)"><path d="M132.5 282.5 L132.5 205 Q150 203 166.7 204 Q177 206 185 210 Q199 217 210 228 Q220 240 226.7 253 Q230 261 230.8 268 L231.7 278Z" fill="#5d6ab8" fill-opacity="0.62" /><path d="M132.5 282.5 L132.5 205 Q150 203 166.7 204 Q177 206 185 210 Q199 217 210 228 Q220 240 226.7 253 Q230 261 230.8 268 L231.7 278Z" fill="url(#streak)" fill-opacity="1" /><path d="M132.5 296.7 L230.8 293.3 L230.8 315 L132.5 320Z" fill="url(#band1)" fill-opacity="0.62" /><path d="M133 334 L232 330 L232 560 L133 560Z" fill="url(#sky)" fill-opacity="0.6" /><path d="M133 560 L232 560 L232 590 L133 590Z" fill="#a09cac" fill-opacity="0.45" /><path d="M133 588 L232 588 L232 766 L133 766Z" fill="url(#cream)" fill-opacity="0.42" /><path d="M133 343 L160 350 L193 366 L193 432 L133 432Z" fill="#d07080" fill-opacity="0.7" /><path d="M193 370 L231 368 L231 430 L193 432Z" fill="#80b8f0" fill-opacity="0.3" /><path d="M135 350 L160 352 L192 367 L190 372 L160 358 L135 356Z" fill="#f0e8f0" fill-opacity="0.6" /><path d="M140 370 L148 368 L150 392 L141 394Z" fill="#7a3040" fill-opacity="0.5" /><path d="M163 380 L170 379 L172 398 L164 400Z" fill="#7a3040" fill-opacity="0.5" /><path d="M162 412 L190 404 L214 418 L208 447 L168 450Z" fill="#405060" fill-opacity="0.7" /><path d="M133 432 L150 432 L231 428 L231 462 L133 462Z" fill="#c8506a" fill-opacity="0.62" /><path d="M133 462 L231 462 L231 512 L133 512Z" fill="#b890b0" fill-opacity="0.78" /><path d="M155 472 L178 472 L178 492 L155 492Z" fill="#e0d8e8" fill-opacity="0.5" /><path d="M133 512 L231 512 L231 548 L133 548Z" fill="#b8a8b8" fill-opacity="0.7" /><path d="M146 512 L176 512 L174 545 L149 545Z" fill="#8a5030" fill-opacity="0.7" /><path d="M133 546 L231 544 L231 560 L133 560Z" fill="#a88870" fill-opacity="0.7" /><path d="M143 766 L231 766 L231 841 L145 841Z" fill="#e8e4d4" fill-opacity="0.45" /><path d="M273.3 276.7 L275 246.7 Q280 232 288 223 Q299 210 313 203 Q335 193 360 191.7 Q377 192 390 196.7 Q405 203 416.7 213 Q428 222 435 231.7 Q440 243 440 255 L440 270 L381.7 273.3 L380 253 Q376 246 370 241.7 Q360 235 346.7 235 Q336 235 326.7 238.3 Q320 242 315 248 Q311 254 310.8 260 L310.8 275.8Z" fill="#5d6ab8" fill-opacity="0.5" /><path d="M275 246.7 Q280 232 288 223 Q299 210 313 203 Q335 193 360 191.7 Q377 192 390 196.7 Q375 215 346.7 235 Q336 235 326.7 238.3 Q320 242 315 248 Q311 254 310.8 260 L310.8 275.8 L273.3 276.7Z" fill="#f6f6fb" fill-opacity="0.62" /><path d="M271.7 289 L316.7 288.3 L316.7 312 L271.7 314Z" fill="#5d6ab8" fill-opacity="0.48" /><path d="M379 285 L440.5 284 L440.5 308 L379 311Z" fill="#5d6ab8" fill-opacity="0.46" /><path d="M379 300 L440.5 297 L440.5 308 L379 311Z" fill="#90c8f0" fill-opacity="0.35" /><path d="M271 330 L320 327 L324 339.5 L312 333.6 L304.5 341 L292.8 339.5 L281 351 L272.6 374.5Z" fill="#70a8e0" fill-opacity="0.62" /><path d="M366.7 328 L440.6 323 L440.6 398 L425 398 L421 370.6 L405.6 351 L386 335.6 L366.7 339.5Z" fill="#70a8e0" fill-opacity="0.62" /><path d="M425 398 L440.6 396 L440.6 530 L423 514.5 L432.8 491 L431 452Z" fill="#8a7890" fill-opacity="0.7" /><path d="M289 433 L279 458 L292.8 460Z" fill="#c05068" fill-opacity="0.7" /><path d="M279 458 L292.8 460 L293.6 473.6 L281 467.8Z" fill="#506070" fill-opacity="0.7" /><path d="M270 503 L279 499 L280 518 L275 569 L276 600 L268 600Z" fill="#9a88a0" fill-opacity="0.55" /><path d="M267.8 600 L281 600 L310.7 754 L267.8 754Z" fill="url(#legs)" fill-opacity="0.45" /><path d="M270 768 L305 768 L324 843 L270 843Z" fill="#e8e4d4" fill-opacity="0.45" /><path d="M343 592.6 L355 592.6 L390.7 754 L348 754Z" fill="url(#legs)" fill-opacity="0.5" /><path d="M357 772 L392 773 L401 847 L358 847Z" fill="#e8e4d4" fill-opacity="0.45" /><path d="M423 606 L441 604 L441 764 L432 763Z" fill="url(#legs)" fill-opacity="0.5" /><path d="M430 776 L441 776 L441 849 L432 849Z" fill="#e8e4d4" fill-opacity="0.45" /><path d="M482 267.8 L482.7 247 Q487 230 493.8 223.3 Q505 210 516 201 Q530 192 542.7 186.3 Q555 180 570.8 177.4 L604.9 178 Q620 182 631.6 189 Q642 197 649.3 205.6 Q660 215 665.6 224.8 L667.9 258.9Z" fill="#5d6ab8" fill-opacity="0.62" /><path d="M482 267.8 L482.7 247 Q487 230 493.8 223.3 Q505 210 516 201 Q530 192 542.7 186.3 Q555 180 570.8 177.4 L604.9 178 Q620 182 631.6 189 Q642 197 649.3 205.6 Q660 215 665.6 224.8 L667.9 258.9Z" fill="url(#streak)" fill-opacity="1" /><path d="M482 283 L667 275 L667 299 L482 309Z" fill="url(#band)" fill-opacity="0.6" /><path d="M482 321 L668 317 L668 560 L482 560Z" fill="url(#sky)" fill-opacity="0.6" /><path d="M482 560 L668 560 L668 590 L482 590Z" fill="#a09cac" fill-opacity="0.45" /><path d="M482 588 L668 588 L668 766 L482 766Z" fill="url(#cream)" fill-opacity="0.42" /><path d="M482 382 L540 380 L552 384 L560 400 L560 560 L482 560Z" fill="url(#bldg)" fill-opacity="0.8" /><path d="M482 382 L540 380 L552 384 L552 390 L482 390Z" fill="#e8e0e8" fill-opacity="0.5" /><path d="M493 408 L508 408 L508 431 L493 431Z" fill="#4a3a48" fill-opacity="0.4" /><path d="M499 410 L502 410 L502 429 L499 429Z" fill="#e8e0e8" fill-opacity="0.35" /><path d="M493 456 L508 456 L508 479 L493 479Z" fill="#4a3a48" fill-opacity="0.4" /><path d="M499 458 L502 458 L502 477 L499 477Z" fill="#e8e0e8" fill-opacity="0.35" /><path d="M493 485 L508 485 L508 505 L493 505Z" fill="#4a3a48" fill-opacity="0.4" /><path d="M499 487 L502 487 L502 503 L499 503Z" fill="#e8e0e8" fill-opacity="0.35" /><path d="M515 408 L530 408 L530 431 L515 431Z" fill="#4a3a48" fill-opacity="0.4" /><path d="M521 410 L524 410 L524 429 L521 429Z" fill="#e8e0e8" fill-opacity="0.35" /><path d="M515 456 L530 456 L530 479 L515 479Z" fill="#4a3a48" fill-opacity="0.4" /><path d="M521 458 L524 458 L524 477 L521 477Z" fill="#e8e0e8" fill-opacity="0.35" /><path d="M515 485 L530 485 L530 505 L515 505Z" fill="#4a3a48" fill-opacity="0.4" /><path d="M521 487 L524 487 L524 503 L521 503Z" fill="#e8e0e8" fill-opacity="0.35" /><path d="M620 440 L668 437 L668 560 L620 560Z" fill="url(#bldg)" fill-opacity="0.75" /><path d="M592 386 Q625 372 645 392 Q652 405 648 420 Q656 440 640 455 L598 455Z" fill="#6a7a98" fill-opacity="0.5" /><path d="M553 365 Q556 347 578 347 Q598 352 600 380 L594 418 Q585 433 568 425 Q553 405 553 365Z" fill="#c09088" fill-opacity="0.72" /><path d="M551 375 Q552 345 578 345 Q604 350 602 385 L598 378 Q590 362 570 360 Q560 365 556 385Z" fill="#b05a50" fill-opacity="0.72" /><path d="M545 440 Q560 425 600 430 L598 545 L545 545 Q538 500 545 440Z" fill="#a07868" fill-opacity="0.55" /><path d="M584 420 Q600 408 620 416 Q630 440 620 462 Q602 470 590 458Z" fill="#b8887a" fill-opacity="0.75" /><path d="M585 425 Q595 405 622 414 L628 428 Q605 418 590 430Z" fill="#8a5848" fill-opacity="0.7" /><path d="M560 470 Q590 455 640 460 Q668 470 668 520 L668 545 L560 545Z" fill="#8a6058" fill-opacity="0.55" /><path d="M485 513 L539 513 L542 540 L668 538 L668 560 L485 564Z" fill="#a08068" fill-opacity="0.68" /><path d="M485 540 L668 538 L668 543 L485 545Z" fill="#d8c8b0" fill-opacity="0.5" /><path d="M515 520 L548 518 L550 535 L520 538Z" fill="#a07860" fill-opacity="0.6" /><path d="M505 528 Q520 560 512 600 Q505 630 489 643 L487 638 Q500 620 506 590 Q510 560 498 530Z" fill="#4a4038" fill-opacity="0.75" /><path d="M555 560 L668 560 L668 625 L620 612 L585 600 L578 625 L605 735 L575 745 L540 615 Z" fill="#6a6478" fill-opacity="0.55" /><path d="M585 600 L615 612 L612 700 L600 730 Z" fill="#c8a0a0" fill-opacity="0.35" /><path d="M591 611.6 L659.6 611.6 L659.6 634.6 L591 634.6Z" fill="#8a5a40" fill-opacity="0.55" /><path d="M622 634.6 L639.6 634.6 L636 743.6 L625 743.6Z" fill="#9a8e84" fill-opacity="0.6" /><path d="M568 732 L608 732 L606 763.7 L566 763.7Z" fill="#b06838" fill-opacity="0.7" /><path d="M610 738 L663 738 L663 762 L610 762Z" fill="#7a7a80" fill-opacity="0.45" /><path d="M636.7 697.7 L667.7 680 L667.7 763.7 L636.7 763.7Z" fill="#7a90a8" fill-opacity="0.55" /><path d="M483 771 L565 771 L565 852.7 L483 852.7Z" fill="#e8e4d4" fill-opacity="0.45" /><path d="M582 775 L667 775 L667 857 L582 857Z" fill="#e8e4d4" fill-opacity="0.45" /><path d="M526 823 Q530 800 565 792 L565 827 L528 829Z" fill="#e0a8e0" fill-opacity="0.75" /><path d="M585 812.5 L614 812.5 L616.6 842 L588 844Z" fill="#e0b0e0" fill-opacity="0.75" /><path d="M585 778 L596.5 778 L596.5 812.5 L585 812.5Z" fill="#5a3848" fill-opacity="0.75" /><path d="M622 778 L636.7 778 L636.7 798 L622 798Z" fill="#686060" fill-opacity="0.7" /><path d="M710 257 L710 240 Q720 195 769 180 L769 257Z" fill="#5d6ab8" fill-opacity="0.62" /><path d="M710 257 L710 240 Q720 195 769 180 L769 257Z" fill="url(#streak)" fill-opacity="1" /><path d="M710 271 L769 270 L769 300 L710 300Z" fill="#a8b0d0" fill-opacity="0.55" /><path d="M709 312 L769 308 L769 560 L709 560Z" fill="url(#sky)" fill-opacity="0.6" /><path d="M709 560 L769 560 L769 590 L709 590Z" fill="#a09cac" fill-opacity="0.45" /><path d="M709 588 L769 588 L769 770 L709 770Z" fill="url(#cream)" fill-opacity="0.42" /><path d="M722 402 L769 398 L769 545 L722 545Z" fill="url(#bldg)" fill-opacity="0.8" /><path d="M720 400 L769 396 L769 408 L722 410Z" fill="#f0e8e0" fill-opacity="0.55" /><path d="M740 460 Q740 440 748 440 Q756 440 756 460 L756 470 L740 470Z" fill="#5a3a48" fill-opacity="0.5" /><path d="M740 500 Q740 480 748 480 Q756 480 756 500 L756 510 L740 510Z" fill="#5a3a48" fill-opacity="0.5" /><path d="M709 436 L722 438 L722 545 L709 545Z" fill="#8a8096" fill-opacity="0.55" /><path d="M709 543 L769 543 L769 560 L709 560Z" fill="#a88870" fill-opacity="0.7" /><path d="M707 780 L769 780 L769 860 L707 860Z" fill="#e8e4d4" fill-opacity="0.45" /></g></svg>
<div class="a" style="left:1621px;top:96px;width:299px;height:949px;background:#333333;"></div>
<div class="a" style="left:1621px;top:133px;width:299px;height:912px;background:#333333;"></div>
<div class="a" style="left:1629px;top:100px;width:123px;height:34px;background:#333;border:1px solid #4a4a4a;border-bottom:none;border-radius:2px 2px 0 0"></div>
<div class="a" style="left:1753px;top:102px;width:57px;height:31px;background:#2e2e2e;border:1px solid #4a4a4a;border-bottom:none;border-radius:2px 2px 0 0"></div>
<div class="a" style="left:1811px;top:102px;width:107px;height:31px;background:#2e2e2e;border:1px solid #4a4a4a;border-bottom:none;border-radius:2px 2px 0 0"></div>
<div class="a" style="left:1752px;top:133px;width:168px;height:1px;background:#4a4a4a;"></div>
<div class="t" style="left:1646.00px;top:109.73px;font-size:14.5px;color:#e6e6e6;letter-spacing:-0.268px;">Advanced C...</div>
<div class="t" style="left:1767.70px;top:110.53px;font-size:14.5px;color:#e6e6e6;letter-spacing:-0.704px;">Pa...</div>
<div class="t" style="left:1828.60px;top:110.53px;font-size:14.5px;color:#e6e6e6;letter-spacing:-0.381px;">Specific C...</div>
<svg class="a" style="left:1629px;top:134.75px;" width="18" height="18" viewBox="0 0 18 18"><circle cx="9" cy="9" r="7.6" fill="none" stroke="#dcdcdc" stroke-width="1.3"/><rect x="4.8" y="8.6" width="8.4" height="5" fill="#dcdcdc"/><path d="M6.3 8.6 V6.8 A2.7 2.7 0 0 1 11.7 6.8" fill="none" stroke="#dcdcdc" stroke-width="1.3"/></svg>
<div class="t" style="left:1652.00px;top:136.13px;font-size:14.5px;color:#e6e6e6;letter-spacing:-0.043px;">Advanced Color Selector</div>
<svg class="a" style="left:1881px;top:137px;" width="15" height="14" viewBox="0 0 15 14"><rect x="0.75" y="5.75" width="8" height="7.5" fill="none" stroke="#dcdcdc" stroke-width="1.4"/><path d="M5 5.75 V0.75 H13.5 V8.5 H8.75" fill="none" stroke="#dcdcdc" stroke-width="1.4"/></svg>
<svg class="a" style="left:1904px;top:139px;" width="12" height="11" viewBox="0 0 12 11"><path d="M1 0.5 L11 10.5 M11 0.5 L1 10.5" stroke="#dcdcdc" stroke-width="1.4"/></svg>
<svg class="a" style="left:1635px;top:161px;" width="20" height="20" viewBox="0 0 20 20"><rect x="0.75" y="0.75" width="18.5" height="18.5" fill="none" stroke="#dcdcdc" stroke-width="1.5"/><path d="M0.75 3.5 H19.25" stroke="#dcdcdc" stroke-width="1.5"/><rect x="4" y="7" width="2.2" height="9" fill="#dcdcdc"/><path d="M8 8 H16 M8 11.5 H16 M8 15 H16" stroke="#dcdcdc" stroke-width="1.4"/></svg>
<div class="a" style="left:1629.8px;top:156.8px;width:273.0px;height:273.0px;border-radius:50%;background:conic-gradient(hsl(90,100%,50%) 0deg,hsl(105,100%,50%) 15deg,hsl(120,100%,50%) 30deg,hsl(135,100%,50%) 45deg,hsl(150,100%,50%) 60deg,hsl(165,100%,50%) 75deg,hsl(180,100%,50%) 90deg,hsl(195,100%,50%) 105deg,hsl(210,100%,50%) 120deg,hsl(225,100%,50%) 135deg,hsl(240,100%,50%) 150deg,hsl(255,100%,50%) 165deg,hsl(270,100%,50%) 180deg,hsl(285,100%,50%) 195deg,hsl(300,100%,50%) 210deg,hsl(315,100%,50%) 225deg,hsl(330,100%,50%) 240deg,hsl(345,100%,50%) 255deg,hsl(0,100%,50%) 270deg,hsl(15,100%,50%) 285deg,hsl(30,100%,50%) 300deg,hsl(45,100%,50%) 315deg,hsl(60,100%,50%) 330deg,hsl(75,100%,50%) 345deg,hsl(90,100%,50%) 360deg);-webkit-mask:radial-gradient(circle,transparent 114.5px,#000 115.5px,#000 136.0px,transparent 136.8px);mask:radial-gradient(circle,transparent 114.5px,#000 115.5px,#000 136.0px,transparent 136.8px)"></div>
<svg class="a" style="left:1702px;top:395px;" width="30" height="30" viewBox="0 0 30 30"><path d="M13 7 L7 27" stroke="#fff" stroke-width="1.6"/></svg>
<div class="a" style="left:1684px;top:211px;width:164px;height:164px;background:linear-gradient(to top,#000,rgba(0,0,0,0)),linear-gradient(to right,#fff,#e818f5)"></div>
<svg class="a" style="left:1677px;top:216px;" width="14" height="14" viewBox="0 0 14 14"><circle cx="7" cy="7" r="5" fill="none" stroke="#333" stroke-width="1.5"/><circle cx="7" cy="7" r="5" fill="none" stroke="#eee" stroke-width="0.7"/><path d="M7 2V12" stroke="#333" stroke-width="1"/></svg>
<div class="a" style="left:1903px;top:155px;width:17px;height:15px;background:#111;"></div>
<div class="a" style="left:1903px;top:170px;width:17px;height:17px;background:#e8e8e8;"></div>
<div class="a" style="left:1903px;top:187px;width:17px;height:16px;background:#c6c6c6;"></div>
<div class="a" style="left:1903px;top:203px;width:17px;height:15px;background:#ee72ee;"></div>
<div class="a" style="left:1903px;top:218px;width:17px;height:17px;background:#c6c6c6;"></div>
<div class="a" style="left:1903px;top:235px;width:17px;height:16px;background:#000;"></div>
<div class="a" style="left:1903px;top:251px;width:17px;height:16px;background:#fff;"></div>
<div class="a" style="left:1903px;top:267px;width:17px;height:16px;background:#5c0a6e;"></div>
<div class="a" style="left:1903px;top:283px;width:17px;height:16px;background:#e010f0;"></div>
<div class="a" style="left:1903px;top:299px;width:17px;height:16px;background:#2a1828;"></div>
<div class="a" style="left:1903px;top:315px;width:17px;height:16px;background:#5a3a50;"></div>
<div class="a" style="left:1903px;top:331px;width:17px;height:16px;background:#6c6272;"></div>
<div class="a" style="left:1903px;top:347px;width:17px;height:16px;background:#5a4258;"></div>
<div class="a" style="left:1903px;top:363px;width:17px;height:16px;background:#402a36;"></div>
<div class="a" style="left:1903px;top:379px;width:17px;height:16px;background:#3c2a32;"></div>
<div class="a" style="left:1903px;top:395px;width:17px;height:48px;background:#6c4c6c;"></div>
<div class="a" style="left:1903px;top:443px;width:17px;height:15px;background:#5c5262;"></div>
<div class="a" style="left:1903px;top:458px;width:17px;height:25px;background:#70707a;"></div>
<svg class="a" style="left:1904px;top:157px;" width="14" height="12" viewBox="0 0 14 12"><circle cx="7" cy="6" r="4.6" fill="none" stroke="#ddd" stroke-width="1.6"/><path d="M4 3 L10 9" stroke="#ddd" stroke-width="1.6"/></svg>
<div class="a" style="left:1629px;top:433px;width:133px;height:10px;background:linear-gradient(90deg,#e0e0e0,#f0f0f0);"></div>
<div class="a" style="left:1770px;top:433px;width:133px;height:10px;background:#efefef;"></div>
<div class="a" style="left:1629px;top:444px;width:133px;height:10px;background:linear-gradient(90deg,#6a6a6a,#d8d8d8);"></div>
<div class="a" style="left:1770px;top:444px;width:133px;height:10px;background:linear-gradient(90deg,#fff0f0,#ff6868);"></div>
<div class="a" style="left:1629px;top:455px;width:133px;height:10px;background:linear-gradient(90deg,#6e3838,#e8e0e0);"></div>
<div class="a" style="left:1770px;top:455px;width:133px;height:10px;background:linear-gradient(90deg,#fff,#fff);"></div>
<div class="a" style="left:1762px;top:433px;width:8px;height:10px;background:#e8e8e8;border:1px solid #555;"></div>
<div class="a" style="left:1762px;top:444px;width:8px;height:10px;background:#e8e8e8;border:1px solid #555;"></div>
<div class="a" style="left:1762px;top:455px;width:8px;height:10px;background:#e8e8e8;border:1px solid #555;"></div>
<div class="a" style="left:1629px;top:468px;width:274px;height:16px;background:#1c1c1c;"></div>
<svg class="a" style="left:1631px;top:470px;" width="12" height="12" viewBox="0 0 12 12"><path d="M2 6 A4 4 0 0 1 9.5 3.5 M10 1 V4.5 H6.5 M10 6 A4 4 0 0 1 2.5 8.5 M2 11 V7.5 H5.5" fill="none" stroke="#dcdcdc" stroke-width="1.4"/></svg>
<div class="a" style="left:1765px;top:488px;width:2px;height:2px;background:#777;"></div>
<div class="a" style="left:1768px;top:488px;width:2px;height:2px;background:#777;"></div>
<div class="a" style="left:1771px;top:488px;width:2px;height:2px;background:#777;"></div>
<div class="a" style="left:1774px;top:488px;width:2px;height:2px;background:#777;"></div>
<div class="a" style="left:1777px;top:488px;width:2px;height:2px;background:#777;"></div>
<div class="a" style="left:1780px;top:488px;width:2px;height:2px;background:#777;"></div>
<div class="a" style="left:1783px;top:488px;width:2px;height:2px;background:#777;"></div>
<div class="a" style="left:1629px;top:495px;width:116px;height:31px;background:#2e2e2e;border:1px solid #4a4a4a;border-bottom:none;border-radius:2px 2px 0 0"></div>
<div class="a" style="left:1745px;top:493px;width:67px;height:34px;background:#333;border:1px solid #4a4a4a;border-bottom:none;border-radius:2px 2px 0 0"></div>
<div class="a" style="left:1813px;top:495px;width:105px;height:31px;background:#2e2e2e;border:1px solid #4a4a4a;border-bottom:none;border-radius:2px 2px 0 0"></div>
<div class="t" style="left:1645.50px;top:503.23px;font-size:14.5px;color:#e6e6e6;letter-spacing:-0.201px;">Brush Pres...</div>
<div class="t" style="left:1762.00px;top:502.73px;font-size:14.5px;color:#e6e6e6;letter-spacing:-0.398px;">Lay...</div>
<div class="t" style="left:1831.00px;top:503.23px;font-size:14.5px;color:#e6e6e6;letter-spacing:0.008px;">Tool Opti...</div>
<svg class="a" style="left:1629px;top:527.7px;" width="18" height="18" viewBox="0 0 18 18"><circle cx="9" cy="9" r="7.6" fill="none" stroke="#dcdcdc" stroke-width="1.3"/><rect x="4.8" y="8.6" width="8.4" height="5" fill="#dcdcdc"/><path d="M6.3 8.6 V6.8 A2.7 2.7 0 0 1 11.7 6.8" fill="none" stroke="#dcdcdc" stroke-width="1.3"/></svg>
<div class="t" style="left:1652.00px;top:529.73px;font-size:14.5px;color:#e6e6e6;letter-spacing:-0.187px;">Layers</div>
<svg class="a" style="left:1881px;top:530px;" width="15" height="14" viewBox="0 0 15 14"><rect x="0.75" y="5.75" width="8" height="7.5" fill="none" stroke="#dcdcdc" stroke-width="1.4"/><path d="M5 5.75 V0.75 H13.5 V8.5 H8.75" fill="none" stroke="#dcdcdc" stroke-width="1.4"/></svg>
<svg class="a" style="left:1904px;top:532px;" width="12" height="11" viewBox="0 0 12 11"><path d="M1 0.5 L11 10.5 M11 0.5 L1 10.5" stroke="#dcdcdc" stroke-width="1.4"/></svg>
<div class="a" style="left:1630px;top:549px;width:255px;height:30px;background:linear-gradient(#3a3a3a,#353535);border:1px solid #1e1e1e;border-top-color:#565656;border-radius:3px"></div>
<div class="t" style="left:1634.40px;top:556.73px;font-size:14.5px;color:#e6e6e6;letter-spacing:0.295px;">Normal</div>
<svg class="a" style="left:1866.5px;top:561px;" width="10" height="6" viewBox="0 0 10 6"><path d="M0 0 H10 L5 6Z" fill="#aaa"/></svg>
<svg class="a" style="left:1896px;top:555px;" width="21" height="21" viewBox="0 0 21 21"><path d="M1 1 H16 L10.5 8 V17 L6.5 14 V8 Z" fill="none" stroke="#dcdcdc" stroke-width="1.4"/><path d="M14 16 H20 L17 20Z" fill="#aaa"/></svg>
<div class="a" style="left:1625px;top:564px;width:2px;height:1.5px;background:#666;"></div>
<div class="a" style="left:1625px;top:567px;width:2px;height:1.5px;background:#666;"></div>
<div class="a" style="left:1625px;top:570px;width:2px;height:1.5px;background:#666;"></div>
<div class="a" style="left:1625px;top:573px;width:2px;height:1.5px;background:#666;"></div>
<div class="a" style="left:1625px;top:576px;width:2px;height:1.5px;background:#666;"></div>
<div class="a" style="left:1625px;top:579px;width:2px;height:1.5px;background:#666;"></div>
<div class="a" style="left:1630px;top:583px;width:167px;height:28px;background:#557da0;"></div>
<div class="a" style="left:1797px;top:583px;width:71px;height:28px;background:#1c1c1c;"></div>
<div class="a" style="left:1868px;top:583px;width:17px;height:28px;background:#353535;border:1px solid #454545;border-radius:0 3px 3px 0"></div>
<svg class="a" style="left:1871px;top:588px;" width="10" height="18" viewBox="0 0 10 18"><path d="M1 5 L5 1 L9 5Z" fill="#888"/><path d="M1 12 L5 16 L9 12Z" fill="#aaa"/></svg>
<div class="t" style="left:1705.00px;top:589.53px;font-size:14.5px;color:#f0f0f0;letter-spacing:-0.174px;">Opacity:  70%</div>
<svg class="a" style="left:1897px;top:592px;" width="20" height="18" viewBox="0 0 20 18"><path d="M0 2 H12 M0 6 H12 M0 10 H12" stroke="#dcdcdc" stroke-width="1.6"/><path d="M13 12 H20 L16.5 16Z" fill="#aaa"/></svg>
<div class="a" style="left:1629px;top:614px;width:289px;height:397px;background:#1c1c1c;"></div>
<svg class="a" style="left:1632px;top:621px;" width="18" height="13" viewBox="0 0 18 13"><ellipse cx="9" cy="6.5" rx="7" ry="5" fill="none" stroke="#5a5a5a" stroke-width="1.2"/><path d="M3 10 Q9 14 15 10" fill="none" stroke="#6a6a6a" stroke-width="1.2"/></svg>
<div class="a" style="left:1656px;top:621px;width:14px;height:14px;background:#161616;"></div>
<div class="a" style="left:1680px;top:619px;width:16px;height:19px;background:repeating-conic-gradient(#4e4e4e 0 25%,#5e5e5e 0 50%) 0 0/4px 4px;"></div>
<svg class="a" style="left:1704px;top:617px;" width="13" height="13" viewBox="0 0 13 13"><path d="M5 1 H11.5 V7.5 M1 2 L8 9 M4.5 12 H11.5 V8" fill="none" stroke="#777" stroke-width="1.2"/><path d="M3 7 V12 H5" fill="none" stroke="#777" stroke-width="1.2"/></svg>
<div class="t" style="left:1727.50px;top:620.73px;font-size:14.5px;color:#a0a0a0;letter-spacing:-0.079px;">value check</div>
<svg class="a" style="left:1864px;top:620px;" width="12" height="15" viewBox="0 0 12 15"><rect x="0" y="7" width="12" height="8" fill="#6a6a6a"/><path d="M2.8 7.5 V5 A3.2 3.2 0 0 1 9.2 5 V7.5" fill="none" stroke="#6a6a6a" stroke-width="1.8"/></svg>
<div class="t" style="left:1881.00px;top:618.42px;font-size:19px;color:#5e5e5e;font-style:italic;">α</div>
<div class="a" style="left:1900px;top:621px;width:15px;height:15px;background:repeating-conic-gradient(#6a6a6a 0 25%,#4a4a4a 0 50%) 0 0/10px 10px;"></div>
<div class="a" style="left:1629px;top:641px;width:289px;height:1px;background:#2a2a2a;"></div>
<svg class="a" style="left:1632px;top:648px;" width="18" height="13" viewBox="0 0 18 13"><ellipse cx="9" cy="6.5" rx="7" ry="5" fill="none" stroke="#5a5a5a" stroke-width="1.2"/><path d="M3 10 Q9 14 15 10" fill="none" stroke="#6a6a6a" stroke-width="1.2"/></svg>
<div class="a" style="left:1656px;top:648px;width:14px;height:14px;background:#161616;"></div>
<div class="a" style="left:1680px;top:646px;width:16px;height:19px;background:repeating-conic-gradient(#4e4e4e 0 25%,#5e5e5e 0 50%) 0 0/4px 4px;"></div>
<svg class="a" style="left:1704px;top:644px;" width="13" height="22" viewBox="0 0 13 22"><path d="M1 2 H5 L6 3.5 H12 V11 H1Z" fill="none" stroke="#888" stroke-width="1.2"/><path d="M4 14 L9 18 L4 22" fill="none" stroke="#dcdcdc" stroke-width="1.4"/></svg>
<div class="t" style="left:1727.50px;top:647.73px;font-size:14.5px;color:#a0a0a0;letter-spacing:0.111px;">originals</div>
<svg class="a" style="left:1864px;top:647px;" width="12" height="15" viewBox="0 0 12 15"><rect x="0" y="7" width="12" height="8" fill="#6a6a6a"/><path d="M2.8 7.5 V5 A3.2 3.2 0 0 1 9.2 5 V7.5" fill="none" stroke="#6a6a6a" stroke-width="1.8"/></svg>
<div class="t" style="left:1881.00px;top:645.42px;font-size:19px;color:#5e5e5e;font-style:italic;">α</div>
<svg class="a" style="left:1900px;top:650px;" width="15" height="11" viewBox="0 0 15 11"><path d="M0 1.5 H15 M0 5.5 H15 M0 9.5 H15" stroke="#6a6a6a" stroke-width="2.4"/><path d="M7 0 V3 M3.5 4 V7 M11 4 V7 M7 8 V11" stroke="#1c1c1c" stroke-width="1"/></svg>
<div class="a" style="left:1629px;top:668px;width:289px;height:1px;background:#2a2a2a;"></div>
<svg class="a" style="left:1632px;top:675px;" width="18" height="13" viewBox="0 0 18 13"><ellipse cx="9" cy="6.5" rx="7" ry="5" fill="none" stroke="#5a5a5a" stroke-width="1.2"/><path d="M3 10 Q9 14 15 10" fill="none" stroke="#6a6a6a" stroke-width="1.2"/></svg>
<div class="a" style="left:1656px;top:675px;width:14px;height:14px;background:#161616;"></div>
<div class="a" style="left:1680px;top:673px;width:16px;height:19px;background:repeating-conic-gradient(#4e4e4e 0 25%,#5e5e5e 0 50%) 0 0/4px 4px;"></div>
<svg class="a" style="left:1704px;top:671px;" width="13" height="13" viewBox="0 0 13 13"><path d="M5 1 H11.5 V7.5 M1 2 L8 9 M4.5 12 H11.5 V8" fill="none" stroke="#777" stroke-width="1.2"/><path d="M3 7 V12 H5" fill="none" stroke="#777" stroke-width="1.2"/></svg>
<div class="t" style="left:1727.50px;top:674.73px;font-size:14.5px;color:#a0a0a0;letter-spacing:-0.479px;">Copy of dark - re...</div>
<svg class="a" style="left:1864px;top:674px;" width="12" height="15" viewBox="0 0 12 15"><rect x="0" y="7" width="12" height="8" fill="#6a6a6a"/><path d="M8.5 7 V4 A3 3 0 0 0 5 1.3" fill="none" stroke="#6a6a6a" stroke-width="1.8"/></svg>
<div class="t" style="left:1881.00px;top:672.42px;font-size:19px;color:#5e5e5e;font-style:italic;">α</div>
<div class="a" style="left:1900px;top:675px;width:15px;height:15px;background:repeating-conic-gradient(#6a6a6a 0 25%,#4a4a4a 0 50%) 0 0/10px 10px;"></div>
<div class="a" style="left:1629px;top:695px;width:289px;height:1px;background:#2a2a2a;"></div>
<svg class="a" style="left:1632px;top:702px;" width="18" height="13" viewBox="0 0 18 13"><ellipse cx="9" cy="6.5" rx="7" ry="5" fill="none" stroke="#5a5a5a" stroke-width="1.2"/><path d="M3 10 Q9 14 15 10" fill="none" stroke="#6a6a6a" stroke-width="1.2"/></svg>
<div class="a" style="left:1656px;top:702px;width:14px;height:14px;background:#161616;"></div>
<div class="a" style="left:1680px;top:700px;width:16px;height:19px;background:repeating-conic-gradient(#4e4e4e 0 25%,#5e5e5e 0 50%) 0 0/4px 4px;"></div>
<svg class="a" style="left:1704px;top:698px;" width="13" height="13" viewBox="0 0 13 13"><path d="M5 1 H11.5 V7.5 M1 2 L8 9 M4.5 12 H11.5 V8" fill="none" stroke="#777" stroke-width="1.2"/><path d="M3 7 V12 H5" fill="none" stroke="#777" stroke-width="1.2"/></svg>
<div class="t" style="left:1727.50px;top:701.73px;font-size:14.5px;color:#a0a0a0;letter-spacing:-0.559px;">Copy of dark - sc...</div>
<svg class="a" style="left:1864px;top:701px;" width="12" height="15" viewBox="0 0 12 15"><rect x="0" y="7" width="12" height="8" fill="#6a6a6a"/><path d="M8.5 7 V4 A3 3 0 0 0 5 1.3" fill="none" stroke="#6a6a6a" stroke-width="1.8"/></svg>
<div class="t" style="left:1881.00px;top:699.42px;font-size:19px;color:#5e5e5e;font-style:italic;">α</div>
<div class="a" style="left:1900px;top:702px;width:15px;height:15px;background:repeating-conic-gradient(#6a6a6a 0 25%,#4a4a4a 0 50%) 0 0/10px 10px;"></div>
<div class="a" style="left:1629px;top:722px;width:289px;height:1px;background:#2a2a2a;"></div>
<svg class="a" style="left:1632px;top:729px;" width="18" height="13" viewBox="0 0 18 13"><ellipse cx="9" cy="6.5" rx="7" ry="5" fill="none" stroke="#5a5a5a" stroke-width="1.2"/><path d="M3 10 Q9 14 15 10" fill="none" stroke="#6a6a6a" stroke-width="1.2"/></svg>
<div class="a" style="left:1656px;top:729px;width:14px;height:14px;background:#161616;"></div>
<div class="a" style="left:1680px;top:727px;width:15px;height:20px;background:linear-gradient(90deg,#9a8a8a,#6a5a5e,#a29090,#6a5a5e,#9a8a8a);"></div>
<svg class="a" style="left:1704px;top:725px;" width="13" height="13" viewBox="0 0 13 13"><path d="M5 1 H11.5 V7.5 M1 2 L8 9 M4.5 12 H11.5 V8" fill="none" stroke="#777" stroke-width="1.2"/><path d="M3 7 V12 H5" fill="none" stroke="#777" stroke-width="1.2"/></svg>
<div class="t" style="left:1727.50px;top:728.73px;font-size:14.5px;color:#a0a0a0;letter-spacing:-0.766px;">Filter Layer 4 (Co...</div>
<svg class="a" style="left:1864px;top:728px;" width="12" height="15" viewBox="0 0 12 15"><rect x="0" y="7" width="12" height="8" fill="#6a6a6a"/><path d="M8.5 7 V4 A3 3 0 0 0 5 1.3" fill="none" stroke="#6a6a6a" stroke-width="1.8"/></svg>
<div class="t" style="left:1881.00px;top:726.42px;font-size:19px;color:#5e5e5e;font-style:italic;">α</div>
<div class="a" style="left:1629px;top:749px;width:289px;height:1px;background:#2a2a2a;"></div>
<svg class="a" style="left:1632px;top:756px;" width="18" height="13" viewBox="0 0 18 13"><path d="M1 6.5 Q9 -1 17 6.5 Q9 14 1 6.5Z" fill="none" stroke="#e6e6e6" stroke-width="1.3"/><circle cx="9" cy="6" r="3.6" fill="#e6e6e6"/><path d="M3 10 Q9 14 15 10" fill="none" stroke="#e6e6e6" stroke-width="1.2"/></svg>
<div class="a" style="left:1656px;top:756px;width:14px;height:14px;background:#161616;"></div>
<div class="a" style="left:1678px;top:754px;width:20px;height:20px;background:repeating-conic-gradient(#fff 0 25%,#e0e0e0 0 50%) 0 0/8px 8px;"></div>
<svg class="a" style="left:1704px;top:752px;" width="13" height="22" viewBox="0 0 13 22"><path d="M1 2 H5 L6 3.5 H12 V11 H1Z" fill="none" stroke="#dcdcdc" stroke-width="1.2"/><path d="M2 16 L6.5 20.5 L11 16" fill="none" stroke="#dcdcdc" stroke-width="1.4"/></svg>
<div class="t" style="left:1727.50px;top:755.73px;font-size:14.5px;color:#f0f0f0;letter-spacing:0.216px;">reflection</div>
<svg class="a" style="left:1864px;top:755px;" width="12" height="15" viewBox="0 0 12 15"><rect x="0" y="7" width="12" height="8" fill="#6a6a6a"/><path d="M8.5 7 V4 A3 3 0 0 0 5 1.3" fill="none" stroke="#6a6a6a" stroke-width="1.8"/></svg>
<div class="t" style="left:1881.00px;top:753.42px;font-size:19px;color:#5e5e5e;font-style:italic;">α</div>
<svg class="a" style="left:1900px;top:756px;" width="16" height="15" viewBox="0 0 16 15"><rect x="0" y="0" width="16" height="15" fill="#eee"/><path d="M3 3 H6 V6 H3Z M10 3 H13 V6 H10Z M3 9 H6 V12 H3Z M10 9 H13 V12 H10Z" fill="#1c1c1c"/><path d="M8 2 V11 M5 8 L8 12 L11 8" stroke="#1c1c1c" stroke-width="1.6" fill="none"/></svg>
<div class="a" style="left:1629px;top:776px;width:289px;height:1px;background:#2a2a2a;"></div>
<svg class="a" style="left:1632px;top:783px;" width="18" height="13" viewBox="0 0 18 13"><path d="M1 6.5 Q9 -1 17 6.5 Q9 14 1 6.5Z" fill="none" stroke="#e6e6e6" stroke-width="1.3"/><circle cx="9" cy="6" r="3.6" fill="#e6e6e6"/><path d="M3 10 Q9 14 15 10" fill="none" stroke="#e6e6e6" stroke-width="1.2"/></svg>
<div class="a" style="left:1656px;top:783px;width:14px;height:14px;background:#161616;"></div>
<div class="a" style="left:1680px;top:784px;width:1px;height:11px;background:#3c3c3c;"></div>
<div class="a" style="left:1680px;top:795px;width:6px;height:1px;background:#3c3c3c;"></div>
<div class="a" style="left:1691px;top:784px;width:20px;height:13px;background:#f2f2f2;"></div>
<div class="a" style="left:1704px;top:786px;width:4px;height:8px;background:#555;"></div>
<div class="a" style="left:1697px;top:788px;width:3px;height:3px;background:#999;"></div>
<svg class="a" style="left:1716px;top:779px;" width="13" height="13" viewBox="0 0 13 13"><path d="M5 1 H11.5 V7.5 M1 2 L8 9 M4.5 12 H11.5 V8" fill="none" stroke="#dcdcdc" stroke-width="1.2"/><path d="M3 7 V12 H5" fill="none" stroke="#dcdcdc" stroke-width="1.2"/></svg>
<div class="t" style="left:1740.00px;top:782.73px;font-size:14.5px;color:#f0f0f0;letter-spacing:0.149px;">reflection-inter...</div>
<svg class="a" style="left:1864px;top:782px;" width="12" height="15" viewBox="0 0 12 15"><rect x="0" y="7" width="12" height="8" fill="#e8e8e8"/><path d="M2.8 7.5 V5 A3.2 3.2 0 0 1 9.2 5 V7.5" fill="none" stroke="#e8e8e8" stroke-width="1.8"/></svg>
<div class="t" style="left:1881.00px;top:780.42px;font-size:19px;color:#5e5e5e;font-style:italic;">α</div>
<div class="a" style="left:1900px;top:783px;width:15px;height:15px;background:repeating-conic-gradient(#6a6a6a 0 25%,#4a4a4a 0 50%) 0 0/10px 10px;"></div>
<div class="a" style="left:1629px;top:803px;width:289px;height:1px;background:#2a2a2a;"></div>
<div class="a" style="left:1674px;top:804px;width:244px;height:26px;background:#557da0;"></div>
<svg class="a" style="left:1632px;top:810px;" width="18" height="13" viewBox="0 0 18 13"><path d="M1 6.5 Q9 -1 17 6.5 Q9 14 1 6.5Z" fill="none" stroke="#e6e6e6" stroke-width="1.3"/><circle cx="9" cy="6" r="3.6" fill="#e6e6e6"/><path d="M3 10 Q9 14 15 10" fill="none" stroke="#e6e6e6" stroke-width="1.2"/></svg>
<div class="a" style="left:1656px;top:810px;width:14px;height:14px;background:#161616;"></div>
<svg class="a" style="left:1657px;top:812px;" width="12" height="10" viewBox="0 0 12 10"><path d="M1 5 L4.5 8.5 L11 1" fill="none" stroke="#eee" stroke-width="1.8"/></svg>
<div class="a" style="left:1680px;top:811px;width:1px;height:11px;background:#3c3c3c;"></div>
<div class="a" style="left:1680px;top:822px;width:6px;height:1px;background:#3c3c3c;"></div>
<div class="a" style="left:1690px;top:807px;width:20px;height:21px;background:linear-gradient(#7e88c4 0,#dde 25%,#e8e4dc 60%,#eee 100%);border:1px solid #222;"></div>
<div class="a" style="left:1702px;top:814px;width:5px;height:10px;background:#7a5a50;"></div>
<svg class="a" style="left:1716px;top:806px;" width="13" height="13" viewBox="0 0 13 13"><path d="M5 1 H11.5 V7.5 M1 2 L8 9 M4.5 12 H11.5 V8" fill="none" stroke="#dcdcdc" stroke-width="1.2"/><path d="M3 7 V12 H5" fill="none" stroke="#dcdcdc" stroke-width="1.2"/></svg>
<svg class="a" style="left:1716px;top:818px;" width="13" height="8" viewBox="0 0 13 8"><path d="M2 1.5 L6.5 6 L11 1.5" fill="none" stroke="#dcdcdc" stroke-width="1.4"/></svg>
<div class="t" style="left:1740.00px;top:809.73px;font-size:14.5px;color:#f0f0f0;letter-spacing:0.173px;font-weight:bold;">reflection</div>
<svg class="a" style="left:1864px;top:809px;" width="12" height="15" viewBox="0 0 12 15"><rect x="0" y="7" width="12" height="8" fill="#8eaac4"/><path d="M8.5 7 V4 A3 3 0 0 0 5 1.3" fill="none" stroke="#8eaac4" stroke-width="1.8"/></svg>
<div class="t" style="left:1881.00px;top:807.42px;font-size:19px;color:#8eaac4;font-style:italic;">α</div>
<div class="a" style="left:1900px;top:810px;width:15px;height:15px;background:repeating-conic-gradient(#8a8a8a 0 25%,#4a4a4a 0 50%) 0 0/10px 10px;"></div>
<svg class="a" style="left:1902px;top:811px;" width="12" height="13" viewBox="0 0 12 13"><rect x="1" y="6" width="10" height="7" fill="#333"/><path d="M3 6.5 V4 A3 3 0 0 1 9 4 V6.5" fill="none" stroke="#333" stroke-width="1.6"/></svg>
<div class="a" style="left:1629px;top:830px;width:289px;height:1px;background:#2a2a2a;"></div>
<svg class="a" style="left:1632px;top:837px;" width="18" height="13" viewBox="0 0 18 13"><path d="M1 6.5 Q9 -1 17 6.5 Q9 14 1 6.5Z" fill="none" stroke="#e6e6e6" stroke-width="1.3"/><circle cx="9" cy="6" r="3.6" fill="#e6e6e6"/><path d="M3 10 Q9 14 15 10" fill="none" stroke="#e6e6e6" stroke-width="1.2"/></svg>
<div class="a" style="left:1656px;top:837px;width:14px;height:14px;background:#161616;"></div>
<div class="a" style="left:1693px;top:838px;width:1px;height:11px;background:#3c3c3c;"></div>
<div class="a" style="left:1693px;top:849px;width:6px;height:1px;background:#3c3c3c;"></div>
<div class="a" style="left:1706px;top:835px;width:16px;height:20px;background:linear-gradient(#fff 40%,#888 60%,#777);"></div>
<svg class="a" style="left:1731px;top:833px;" width="10" height="11" viewBox="0 0 10 11"><rect x="0.75" y="0.75" width="8.5" height="9.5" fill="none" stroke="#dcdcdc" stroke-width="1.2"/><rect x="3" y="3" width="4" height="5" fill="#777"/></svg>
<div class="t" style="left:1753.00px;top:836.73px;font-size:14.5px;color:#f0f0f0;letter-spacing:-0.104px;">Transparenc...</div>
<svg class="a" style="left:1864px;top:836px;" width="12" height="15" viewBox="0 0 12 15"><rect x="0" y="7" width="12" height="8" fill="#6a6a6a"/><path d="M8.5 7 V4 A3 3 0 0 0 5 1.3" fill="none" stroke="#6a6a6a" stroke-width="1.8"/></svg>
<div class="a" style="left:1629px;top:857px;width:289px;height:1px;background:#2a2a2a;"></div>
<svg class="a" style="left:1632px;top:864px;" width="18" height="13" viewBox="0 0 18 13"><ellipse cx="9" cy="6.5" rx="7" ry="5" fill="none" stroke="#5a5a5a" stroke-width="1.2"/><path d="M3 10 Q9 14 15 10" fill="none" stroke="#6a6a6a" stroke-width="1.2"/></svg>
<div class="a" style="left:1656px;top:864px;width:14px;height:14px;background:#161616;"></div>
<div class="a" style="left:1680px;top:862px;width:15px;height:20px;background:linear-gradient(90deg,#9a8a8a,#6a5a5e,#a29090,#6a5a5e,#9a8a8a);"></div>
<svg class="a" style="left:1704px;top:860px;" width="13" height="13" viewBox="0 0 13 13"><path d="M5 1 H11.5 V7.5 M1 2 L8 9 M4.5 12 H11.5 V8" fill="none" stroke="#777" stroke-width="1.2"/><path d="M3 7 V12 H5" fill="none" stroke="#777" stroke-width="1.2"/></svg>
<div class="t" style="left:1727.50px;top:863.73px;font-size:14.5px;color:#a0a0a0;letter-spacing:0.091px;">Background</div>
<svg class="a" style="left:1864px;top:863px;" width="12" height="15" viewBox="0 0 12 15"><rect x="0" y="7" width="12" height="8" fill="#6a6a6a"/><path d="M8.5 7 V4 A3 3 0 0 0 5 1.3" fill="none" stroke="#6a6a6a" stroke-width="1.8"/></svg>
<div class="t" style="left:1881.00px;top:861.42px;font-size:19px;color:#5e5e5e;font-style:italic;">α</div>
<div class="a" style="left:1900px;top:864px;width:15px;height:15px;background:repeating-conic-gradient(#6a6a6a 0 25%,#4a4a4a 0 50%) 0 0/10px 10px;"></div>
<svg class="a" style="left:1902px;top:865px;" width="12" height="13" viewBox="0 0 12 13"><rect x="1" y="6" width="10" height="7" fill="#555"/><path d="M3 6.5 V4 A3 3 0 0 1 9 4 V6.5" fill="none" stroke="#555" stroke-width="1.6"/></svg>
<div class="a" style="left:1629px;top:884px;width:289px;height:1px;background:#2a2a2a;"></div>
<svg class="a" style="left:1635px;top:1018px;" width="19" height="19" viewBox="0 0 19 19"><path d="M9.5 0 V19 M0 9.5 H19" stroke="#dcdcdc" stroke-width="1.8"/></svg>
<svg class="a" style="left:1662px;top:1024px;" width="10" height="6" viewBox="0 0 10 6"><path d="M0 0 H10 L5 6Z" fill="#aaa"/></svg>
<svg class="a" style="left:1681px;top:1017px;" width="21" height="21" viewBox="0 0 21 21"><rect x="5.5" y="0.75" width="14.5" height="14.5" fill="none" stroke="#dcdcdc" stroke-width="1.6"/><path d="M0.75 5 V20.25 H16" fill="none" stroke="#dcdcdc" stroke-width="1.6"/></svg>
<svg class="a" style="left:1713px;top:1022px;" width="21" height="11" viewBox="0 0 21 11"><path d="M1 1 L10.5 10 L20 1" fill="none" stroke="#dcdcdc" stroke-width="1.7"/></svg>
<svg class="a" style="left:1745px;top:1022px;" width="21" height="11" viewBox="0 0 21 11"><path d="M1 10 L10.5 1 L20 10" fill="none" stroke="#dcdcdc" stroke-width="1.7"/></svg>
<svg class="a" style="left:1777px;top:1019px;" width="21" height="16" viewBox="0 0 21 16"><path d="M0 2 H20 M0 8 H20 M0 14 H20" stroke="#dcdcdc" stroke-width="1.6"/><circle cx="14" cy="2" r="1.8" fill="#dcdcdc"/><circle cx="6" cy="8" r="1.8" fill="#dcdcdc"/><circle cx="12" cy="14" r="1.8" fill="#dcdcdc"/></svg>
<svg class="a" style="left:1805px;top:1024px;" width="10" height="6" viewBox="0 0 10 6"><path d="M0 0 H10 L5 6Z" fill="#aaa"/></svg>
<svg class="a" style="left:1895px;top:1017px;" width="18" height="20" viewBox="0 0 18 20"><path d="M0 4 H18" stroke="#dcdcdc" stroke-width="2"/><path d="M6 3 V1 H12 V3" fill="none" stroke="#dcdcdc" stroke-width="1.5"/><path d="M2 6 H16 L15 20 H3Z" fill="#dcdcdc"/></svg>
<div class="a" style="left:0px;top:1045px;width:1620px;height:35px;background:#333333;"></div>
<div class="a" style="left:1620px;top:1045px;width:300px;height:35px;background:#333333;"></div>
<svg class="a" style="left:7px;top:1054px;" width="15" height="15" viewBox="0 0 15 15"><rect x="0.5" y="0.5" width="14" height="14" fill="none" stroke="#888" stroke-width="1"/><circle cx="7.5" cy="7.5" r="4.5" fill="none" stroke="#ccc" stroke-width="1" stroke-dasharray="1.5 1"/></svg>
<div class="t" style="left:37.50px;top:1054.59px;font-size:15.25px;color:#e6e6e6;letter-spacing:0.096px;">02-Ej-Airbrush-Soft</div>
<div class="t" style="left:461.00px;top:1054.59px;font-size:15.25px;color:#e6e6e6;letter-spacing:0.091px;">RGB/Alpha (8-bit integer/channel)  sRGB-elle-V2-srgbtrc.icc</div>
<div class="a" style="left:1376px;top:1046px;width:163px;height:31px;border:1px solid #3c3c3c;background:#2e2e2e"></div>
<div class="a" style="left:1377px;top:1049px;width:22px;height:25px;background:#4a6a8c;"></div>
<div class="t" style="left:1380.00px;top:1054.59px;font-size:15.25px;color:#e6e6e6;letter-spacing:-0.160px;">3,600 x 4,800 (1.7 GiB)</div>
<div class="a" style="left:1421px;top:1071px;width:8px;height:1px;background:#e6e6e6;"></div>
<div class="a" style="left:1547px;top:1049px;width:26px;height:26px;border-radius:50%;background:#141414;border:1px solid #3a3a3a"></div>
<svg class="a" style="left:1555px;top:1058px;" width="20" height="8" viewBox="0 0 20 8"><circle cx="5" cy="4" r="1.8" fill="#eee"/><path d="M5 4 H18" stroke="#ccc" stroke-width="1.4" stroke-dasharray="2 1"/><circle cx="18" cy="4" r="1.3" fill="#eee"/></svg>
<div class="t" style="left:1583.50px;top:1054.59px;font-size:15.25px;color:#e6e6e6;letter-spacing:-0.356px;">0.00°</div>
<div class="t" style="left:1749.00px;top:1054.59px;font-size:15.25px;color:#e6e6e6;letter-spacing:-0.448px;">17.7%</div>
<div class="a" style="left:1808px;top:1060px;width:81px;height:3px;background:#1e1e1e;"></div>
<div class="a" style="left:1808px;top:1060px;width:16px;height:3px;background:#557da0;"></div>
<div class="a" style="left:1824px;top:1054px;width:14px;height:16px;border-radius:2px;background:#3a3a3a;border:1px solid #555"></div>
<svg class="a" style="left:1895px;top:1054px;" width="21" height="16" viewBox="0 0 21 16"><rect x="0.75" y="0.75" width="19.5" height="11.5" fill="none" stroke="#dcdcdc" stroke-width="1.5"/><circle cx="10.5" cy="6.5" r="1.3" fill="#dcdcdc"/><path d="M10.5 12 V15 M5 15.25 H16" stroke="#dcdcdc" stroke-width="1.5"/></svg>
</body></html>
